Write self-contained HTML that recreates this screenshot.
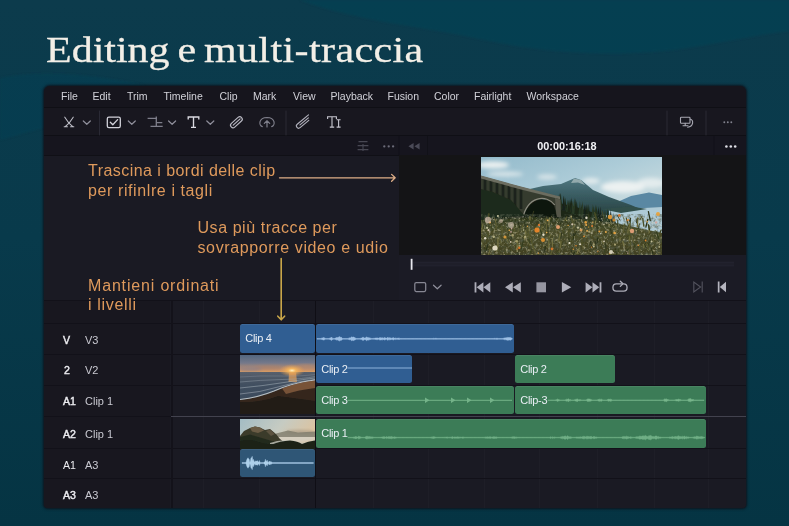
<!DOCTYPE html>
<html>
<head>
<meta charset="utf-8">
<style>
html,body{margin:0;padding:0;}
body{width:789px;height:526px;overflow:hidden;position:relative;background:#0a3a4b;font-family:"Liberation Sans",sans-serif;}
.abs{position:absolute;}
#bg{position:absolute;left:0;top:0;width:789px;height:526px;}
#title{word-spacing:-2.3px;will-change:transform;position:absolute;left:46px;top:25.5px;-webkit-text-stroke:0.3px #f3efe7;font-family:"Liberation Serif",serif;font-size:36.5px;color:#f3efe7;white-space:nowrap;line-height:48px;transform-origin:0 0;transform:scaleX(1.15);}
#win{position:absolute;left:43.5px;top:85.5px;width:702.7px;height:422px;background:#1a1a23;border-radius:6px 6px 4px 4px;overflow:hidden;box-shadow:0 0 2.5px 0.5px rgba(14,14,22,0.85);}
#in{will-change:transform;position:absolute;left:-43.5px;top:-85.5px;width:789px;height:526px;}
#in div,#in svg,#in span{position:absolute;}
.menu span{top:90px;font-size:10.5px;color:#d2d2d9;white-space:nowrap;line-height:13px;}
.ann{color:#df9a5c;font-size:16px;letter-spacing:0.45px;line-height:19.3px;white-space:nowrap;z-index:5;}
.hb{left:63px;font-size:10.6px;color:#ececf0;font-weight:normal;-webkit-text-stroke:0.4px #ececf0;line-height:12px;}
.hn{left:85px;font-size:11px;color:#c9c9d1;line-height:12px;}
.clip{border-radius:2.5px;overflow:hidden;box-shadow:inset 0 1px 0 rgba(255,255,255,0.07);}
.clip span{left:5.3px;top:8px;letter-spacing:-0.3px;font-size:11px;color:#e9eef4;white-space:nowrap;line-height:13px;}
.blue{background:#305e92;}
.green{background:#3c7c57;}
.hl{height:1px;background:#121119;left:42px;width:705px;}
.gl{width:1px;top:301px;height:207px;background:rgba(255,255,255,0.02);}
.vl{width:1px;background:#15151c;top:301px;height:207px;}
</style>
</head>
<body>
<svg id="bg" viewBox="0 0 789 526">
  <defs>
    <linearGradient id="bgg" x1="0" y1="0" x2="0" y2="1">
      <stop offset="0" stop-color="#0c3b4c"/>
      <stop offset="0.45" stop-color="#083a4b"/>
      <stop offset="1" stop-color="#053443"/>
    </linearGradient>
    <filter id="bgb"><feGaussianBlur stdDeviation="1.2"/></filter>
  </defs>
  <rect width="789" height="526" fill="url(#bgg)"/>
  <g filter="url(#bgb)">
  <path d="M300 0 C360 22 420 26 470 37 C540 53 620 60 700 46 C740 39 770 33 789 31 L789 0 Z" fill="#0a4558" opacity="0.55"/>
  <path d="M0 78 C40 70 90 74 140 84 L160 95 L0 140 Z" fill="#0a4558" opacity="0.35"/>
  </g>
</svg>
<div id="title">Editing e <span style="letter-spacing:0.35px">multi-traccia</span></div>

<div id="win"><div id="in">
  <!-- bars -->
  <div style="left:42px;top:84px;width:705px;height:23px;background:#16151d"></div>
  <div style="left:42px;top:107px;width:705px;height:1px;background:#0f0f15"></div>
  <div style="left:42px;top:108px;width:705px;height:27px;background:#18171f"></div>
  <div style="left:42px;top:134.5px;width:705px;height:1px;background:#0f0f15"></div>
  <div style="left:42px;top:136px;width:705px;height:19px;background:#16151e"></div>
  <div style="left:42px;top:155px;width:705px;height:1px;background:#101016"></div>

  <div class="menu">
    <span style="left:61px">File</span>
    <span style="left:92.5px">Edit</span>
    <span style="left:127px">Trim</span>
    <span style="left:163.5px">Timeline</span>
    <span style="left:219.5px">Clip</span>
    <span style="left:253px">Mark</span>
    <span style="left:293px">View</span>
    <span style="left:330.5px">Playback</span>
    <span style="left:387.5px">Fusion</span>
    <span style="left:434px">Color</span>
    <span style="left:474px">Fairlight</span>
    <span style="left:526.5px">Workspace</span>
  </div>

  <!-- TOOLBAR ICONS -->
  <svg id="tb" style="left:42px;top:108px" width="705" height="28" viewBox="42 108 705 28" fill="none" stroke-linecap="round" stroke-linejoin="round">
    <!-- cut icon -->
    <g stroke="#bfbfc8" stroke-width="1.1">
      <path d="M64.8 117.2 L69 123.2 L72.8 126.6 M73.2 117.2 L69 123.2 L65.2 126.6 M64.2 126.8 H67.4 M70.6 126.8 H73.8"/>
    </g>
    <g stroke="#8f8f9b" stroke-width="1.2">
      <path d="M83.3 121 L86.8 124.3 L90.3 121"/>
      <path d="M128.3 121 L131.8 124.3 L135.3 121"/>
      <path d="M168.6 121 L172.1 124.3 L175.6 121"/>
      <path d="M206.8 121 L210.3 124.3 L213.8 121"/>
    </g>
    <path d="M99.5 111 V135 M286 111 V135 M667 111 V135 M706 111 V135" stroke="#2a2a35" stroke-width="1"/>
    <!-- checkbox -->
    <rect x="107.3" y="117.2" width="13" height="10.4" rx="1.6" stroke="#d2d2da" stroke-width="1.3"/>
    <path d="M110.3 122.2 L112.8 124.8 L117.6 119.6" stroke="#d2d2da" stroke-width="1.3"/>
    <!-- trim icon -->
    <g stroke="#7e7e8a" stroke-width="1.3" stroke-linecap="butt">
      <path d="M147.6 118.3 H157 M156.3 116.6 V127 M156.3 122.6 H162.3 M150.5 126.4 H162.7"/>
    </g>
    <!-- T -->
    <path d="M188.2 119.4 V117 H198.8 V119.4 M193.5 117 V127.2 M191 127.3 H196" stroke="#dadae1" stroke-width="1.35" stroke-linecap="butt" stroke-linejoin="miter"/>
    <!-- paperclip (capsule) -->
    <g transform="translate(236.4 122.2) rotate(-42)" stroke="#b9b9c3" stroke-width="1.15">
      <rect x="-7" y="-2.5" width="14" height="5" rx="2.5"/>
      <path d="M-4.3 0 H5"/>
    </g>
    <!-- upload -->
    <g stroke="#7f7f8b" stroke-width="1.2">
      <path d="M262.3 126.6 C258.6 125.4 258.4 117.8 267 117.5 C275.6 117.8 275.4 125.4 271.7 126.6"/>
      <path d="M267 127 V121 M264.3 123.4 L267 120.8 L269.7 123.4"/>
    </g>
    <!-- double clip -->
    <g transform="translate(303.4 122) rotate(-40)" stroke="#b0b0bb" stroke-width="1.15">
      <path d="M8.5 -2.2 H-6.2 A2.2 2.2 0 0 0 -6.2 2.2 H5.2"/>
      <path d="M6.5 0 H-4.5"/>
    </g>
    <!-- Ti -->
    <path d="M327.6 119 V116.8 H336.4 V119 M332 116.8 V127 M329.8 127.1 H334.2 M336.6 119.8 H340.6 M338.6 119.8 V127 M336.6 127.1 H340.6" stroke="#c6c6cf" stroke-width="1.12" stroke-linecap="butt" stroke-linejoin="miter"/>
    <!-- monitor icon -->
    <g stroke="#a9a9b3" stroke-width="1.1">
      <rect x="680.5" y="117.3" width="9.5" height="6" rx="0.8"/>
      <path d="M685.2 123.3 V125.6 M683 125.8 H688"/>
      <path d="M690.3 119.2 C693.8 119.6 693.8 126.4 687.6 127.2"/>
    </g>
    <g fill="#81818d" stroke="none"><circle cx="724.3" cy="122.3" r="0.95"/><circle cx="727.8" cy="122.3" r="0.95"/><circle cx="731.3" cy="122.3" r="0.95"/></g>
  </svg>

  <!-- SUBBAR ICONS -->
  <svg id="sb" style="left:42px;top:136px" width="705" height="20" viewBox="42 136 705 20" fill="none">
    <path d="M399 136 V155 M427.5 136 V155 M714 136 V155" stroke="#111118" stroke-width="1"/>
    <g stroke="#484853" stroke-width="1.1"><path d="M358.5 141.6 H367.5 M357.6 145.6 H368.4 M357.6 149.6 H368.4 M363 144 V151"/></g>
    <g fill="#6b6b78"><circle cx="384.3" cy="146.4" r="1.15"/><circle cx="388.7" cy="146.4" r="1.15"/><circle cx="393.1" cy="146.4" r="1.15"/></g>
    <g fill="#4a4a57"><path d="M413.6 143 V149.4 L408.4 146.2 Z M419.6 143 V149.4 L414.4 146.2 Z"/></g>
    <text x="566.9" y="150.2" text-anchor="middle" font-family="Liberation Sans" font-weight="bold" font-size="10.9" fill="#f1f1f5">00:00:16:18</text>
    <g fill="#dfdfe6"><circle cx="726.4" cy="146.5" r="1.3"/><circle cx="730.8" cy="146.5" r="1.3"/><circle cx="735.2" cy="146.5" r="1.3"/></g>
  </svg>

  <!-- left annotation panel -->
  <div class="ann" style="left:88px;top:161.3px">Trascina i bordi delle clip<br><span style="position:static;letter-spacing:0.6px">per rifinlre i tagli</span></div>
  <div class="ann" style="left:197.5px;top:218.3px"><span style="position:static;letter-spacing:0.56px">Usa più tracce per</span><br><span style="position:static;letter-spacing:0.62px">sovrapporre video e udio</span></div>
  <div class="ann" style="left:88px;top:276px"><span style="position:static;letter-spacing:0.83px">Mantieni ordinati</span><br><span style="position:static;letter-spacing:0.67px">i livelli</span></div>

  <!-- viewer -->
  <div style="left:399px;top:155px;width:348px;height:100px;background:#141416"></div>
  <div style="left:399px;top:255px;width:348px;height:45px;background:#1b1b25"></div>
  <div id="vid" style="left:481px;top:156.7px;width:180.5px;height:98px;background:#4a6a60;overflow:hidden"><svg width="181" height="98" viewBox="0 0 181 98" style="left:0;top:0">
<defs>
<linearGradient id="sky" x1="0" y1="0" x2="1" y2="1"><stop offset="0" stop-color="#93bacb"/><stop offset="0.45" stop-color="#adccd8"/><stop offset="1" stop-color="#d8e3e2"/></linearGradient>
<linearGradient id="mt" x1="0" y1="0" x2="0" y2="1"><stop offset="0" stop-color="#4f7780"/><stop offset="0.5" stop-color="#37595e"/><stop offset="1" stop-color="#27403f"/></linearGradient>
<linearGradient id="fg" x1="0" y1="0" x2="0" y2="1"><stop offset="0" stop-color="#2b341c"/><stop offset="0.35" stop-color="#494b27"/><stop offset="1" stop-color="#414022"/></linearGradient>
<filter id="b1"><feGaussianBlur stdDeviation="0.6"/></filter>
<filter id="b2"><feGaussianBlur stdDeviation="2.2"/></filter>
<filter id="nz" x="0" y="0" width="100%" height="100%"><feTurbulence type="fractalNoise" baseFrequency="0.4" numOctaves="3" seed="4"/><feColorMatrix type="matrix" values="0 0 0 0 0.66  0 0 0 0 0.62  0 0 0 0 0.42  1.7 0 0 0 -0.86"/></filter>
<filter id="nz2" x="0" y="0" width="100%" height="100%"><feTurbulence type="fractalNoise" baseFrequency="0.28" numOctaves="3" seed="9"/><feColorMatrix type="matrix" values="0 0 0 0 0.09  0 0 0 0 0.11  0 0 0 0 0.07  0 1.9 0 0 -0.78"/></filter>
</defs>
<rect width="181" height="62" fill="url(#sky)"/>
<g filter="url(#b2)" fill="#ecf1f1"><ellipse cx="12" cy="8" rx="16" ry="3.5"/><ellipse cx="24" cy="17" rx="18" ry="2.6" opacity="0.75"/><ellipse cx="142" cy="30" rx="22" ry="6"/><ellipse cx="170" cy="26" rx="14" ry="5" opacity="0.8"/><ellipse cx="66" cy="20" rx="10" ry="2.5" opacity="0.7"/><ellipse cx="110" cy="24" rx="9" ry="3" opacity="0.85"/></g>
<g filter="url(#b1)">
<path d="M134 46 L150 39 L168 35.5 L181 38 V56 H134 Z" fill="#5a88a3"/>
<path d="M40 34 L62 29 L80 27 L94 21 L100 23 L112 33 L128 40 L150 48 L164 54 L110 60 L40 60 Z" fill="url(#mt)"/>
<path d="M93 21.5 L100 23 L104 28 L97 25.5 L90 26 Z" fill="#93aaad"/>
<path d="M128 53 L181 50 V80 L128 76 Z" fill="#aecad6"/>
<path d="M120 52 L150 49.5 L166 52 L140 56 Z" fill="#31504c"/>
<path d="M0 26 L20 30 L45 40 L70 44 L95 50 L120 58 L134 64 L140 76 L150 98 H0 Z" fill="#1c2719"/>
<path d="M115.6 64.9 L117.2 51.5 L118.8 64.9 Z" fill="#24321f"/><path d="M115.7 65.0 L117.3 48.9 L118.9 65.0 Z" fill="#18211a"/><path d="M94.2 57.9 L95.8 43.9 L97.4 57.9 Z" fill="#1c2819"/><path d="M97.3 58.9 L98.9 43.9 L100.5 58.9 Z" fill="#2a3a26"/><path d="M102.6 60.6 L104.2 48.1 L105.8 60.6 Z" fill="#18211a"/><path d="M82.6 54.0 L84.2 40.4 L85.8 54.0 Z" fill="#1c2819"/><path d="M127.5 68.9 L129.1 54.6 L130.7 68.9 Z" fill="#18211a"/><path d="M98.9 59.4 L100.5 47.0 L102.1 59.4 Z" fill="#24321f"/><path d="M78.0 52.5 L79.6 39.9 L81.2 52.5 Z" fill="#1c2819"/><path d="M78.3 52.6 L79.9 37.0 L81.5 52.6 Z" fill="#2a3a26"/><path d="M113.1 64.1 L114.7 47.4 L116.3 64.1 Z" fill="#2a3a26"/><path d="M121.6 66.9 L123.2 52.9 L124.8 66.9 Z" fill="#2a3a26"/><path d="M113.9 64.4 L115.5 48.3 L117.1 64.4 Z" fill="#24321f"/><path d="M125.3 68.2 L126.9 53.1 L128.5 68.2 Z" fill="#24321f"/><path d="M106.2 61.8 L107.8 46.9 L109.4 61.8 Z" fill="#1c2819"/><path d="M111.1 63.4 L112.7 48.9 L114.3 63.4 Z" fill="#24321f"/><path d="M88.8 56.1 L90.4 43.7 L92.0 56.1 Z" fill="#1c2819"/><path d="M100.0 59.8 L101.6 44.1 L103.2 59.8 Z" fill="#2a3a26"/><path d="M77.5 52.4 L79.1 36.1 L80.7 52.4 Z" fill="#18211a"/><path d="M105.1 61.5 L106.7 47.4 L108.3 61.5 Z" fill="#24321f"/><path d="M85.1 54.9 L86.7 42.5 L88.3 54.9 Z" fill="#2a3a26"/><path d="M111.4 63.5 L113.0 50.4 L114.6 63.5 Z" fill="#24321f"/><path d="M131.6 70.2 L133.2 57.7 L134.8 70.2 Z" fill="#2a3a26"/><path d="M130.5 69.9 L132.1 55.6 L133.7 69.9 Z" fill="#1c2819"/><path d="M110.0 63.1 L111.6 50.9 L113.2 63.1 Z" fill="#2a3a26"/><path d="M76.5 52.0 L78.1 36.3 L79.7 52.0 Z" fill="#1c2819"/><path d="M89.0 56.2 L90.6 40.4 L92.2 56.2 Z" fill="#1c2819"/><path d="M117.6 65.6 L119.2 49.3 L120.8 65.6 Z" fill="#18211a"/><path d="M113.3 64.2 L114.9 49.5 L116.5 64.2 Z" fill="#24321f"/><path d="M89.8 56.4 L91.4 44.1 L93.0 56.4 Z" fill="#2a3a26"/><path d="M92.2 57.2 L93.8 40.7 L95.4 57.2 Z" fill="#2a3a26"/><path d="M102.1 60.5 L103.7 47.4 L105.3 60.5 Z" fill="#18211a"/><path d="M128.2 69.1 L129.8 52.6 L131.4 69.1 Z" fill="#18211a"/><path d="M91.5 57.0 L93.1 42.6 L94.7 57.0 Z" fill="#2a3a26"/><path d="M124.9 68.0 L126.5 51.6 L128.1 68.0 Z" fill="#24321f"/><path d="M87.8 55.8 L89.4 42.1 L91.0 55.8 Z" fill="#1c2819"/><path d="M122.7 67.3 L124.3 53.8 L125.9 67.3 Z" fill="#2a3a26"/><path d="M93.2 57.5 L94.8 41.6 L96.4 57.5 Z" fill="#1c2819"/><path d="M81.4 53.6 L83.0 38.9 L84.6 53.6 Z" fill="#2a3a26"/><path d="M119.6 66.3 L121.2 53.1 L122.8 66.3 Z" fill="#18211a"/><path d="M104.1 61.1 L105.7 47.3 L107.3 61.1 Z" fill="#1c2819"/><path d="M86.5 55.3 L88.1 42.4 L89.7 55.3 Z" fill="#2a3a26"/><path d="M77.7 52.4 L79.3 35.9 L80.9 52.4 Z" fill="#24321f"/><path d="M81.1 53.5 L82.7 38.4 L84.3 53.5 Z" fill="#18211a"/><path d="M110.3 63.2 L111.9 47.1 L113.5 63.2 Z" fill="#2a3a26"/><path d="M86.3 55.3 L87.9 43.0 L89.5 55.3 Z" fill="#1c2819"/><path d="M9.5 44.2 L11.3 28.6 L13.1 44.2 Z" fill="#24321f"/><path d="M34.6 51.2 L36.4 35.5 L38.2 51.2 Z" fill="#24321f"/><path d="M32.4 50.6 L34.2 35.4 L36.0 50.6 Z" fill="#1c2819"/><path d="M34.6 51.2 L36.4 36.9 L38.2 51.2 Z" fill="#1c2819"/><path d="M18.3 46.6 L20.1 27.7 L21.9 46.6 Z" fill="#1c2819"/><path d="M3.3 42.4 L5.1 24.0 L6.9 42.4 Z" fill="#2d3b25"/><path d="M29.1 49.6 L30.9 33.9 L32.7 49.6 Z" fill="#1c2819"/><path d="M18.7 46.8 L20.5 27.9 L22.3 46.8 Z" fill="#1c2819"/><path d="M22.7 47.9 L24.5 32.4 L26.3 47.9 Z" fill="#1c2819"/><path d="M39.3 52.5 L41.1 38.2 L42.9 52.5 Z" fill="#1c2819"/><path d="M18.9 46.8 L20.7 32.5 L22.5 46.8 Z" fill="#2d3b25"/><path d="M18.1 46.6 L19.9 32.3 L21.7 46.6 Z" fill="#2d3b25"/><path d="M41.6 53.2 L43.4 37.7 L45.2 53.2 Z" fill="#2d3b25"/><path d="M0.7 41.7 L2.5 23.0 L4.3 41.7 Z" fill="#1c2819"/><path d="M29.0 49.6 L30.8 30.7 L32.6 49.6 Z" fill="#1c2819"/><path d="M7.0 43.5 L8.8 27.5 L10.6 43.5 Z" fill="#2d3b25"/><path d="M23.0 48.0 L24.8 33.0 L26.6 48.0 Z" fill="#2d3b25"/><path d="M33.7 50.9 L35.5 35.1 L37.3 50.9 Z" fill="#24321f"/><path d="M-0.8 41.3 L1.0 27.0 L2.8 41.3 Z" fill="#2d3b25"/><path d="M36.9 51.8 L38.7 37.6 L40.5 51.8 Z" fill="#24321f"/><path d="M11.1 44.6 L12.9 27.9 L14.7 44.6 Z" fill="#1c2819"/><path d="M16.9 46.2 L18.7 28.4 L20.5 46.2 Z" fill="#1c2819"/>
<path d="M0 19 L40 30 L79 40 L80 52 L79 64 L73 49 C65 38 49 39 42 60 L36 64 L0 46 Z" fill="#363a2e"/>
<path d="M4 22 V44 M10 24 V46 M16 25 V48 M22 27 V50 M28 29 V52 M34 30 V54 M40 32 V52" stroke="#1d241a" stroke-width="2.8"/>
<path d="M0 18.5 L40 29.5 L79 39.5 L79 42.2 L40 32.5 L0 21.5 Z" fill="#6c6d60"/>
<path d="M74 41 L79.5 42.5 L80 60 L75.5 60 Z" fill="#55574a"/>
<path d="M42 63 C47 40 65 38 73 48.5 L77 65 Z" fill="#11160f"/>
<path d="M41.5 62 C46.5 38.5 65.5 37 73.8 48" stroke="#8a8a7e" stroke-width="1.2" fill="none"/>
<path d="M0 32 L12 35 L30 43 L44 59 L0 62 Z" fill="#1f2a1b"/>
<path d="M0 63 L50 60 L100 62 L134 66 L181 76 V98 H0 Z" fill="url(#fg)"/>
</g>
<rect y="57" width="181" height="41" filter="url(#nz2)"/>
<rect y="60" width="181" height="38" filter="url(#nz)"/>
<g filter="url(#b1)" stroke-linecap="round"><path d="M159.0 62.7 l2.0 -3.5" stroke="#55572d" stroke-width="1.2"/><path d="M136.7 69.2 l0.1 -6.0" stroke="#343d1d" stroke-width="1.0"/><path d="M88.5 87.8 l-1.7 -3.9" stroke="#4a4d26" stroke-width="0.8"/><path d="M115.2 62.4 l-1.6 -7.0" stroke="#55572d" stroke-width="0.7"/><path d="M149.1 75.7 l-2.3 -3.4" stroke="#4a4d26" stroke-width="1.0"/><path d="M122.5 86.8 l-1.3 -3.2" stroke="#6b693a" stroke-width="0.9"/><path d="M45.1 69.6 l0.1 -7.4" stroke="#2a321a" stroke-width="0.7"/><path d="M148.9 70.1 l0.5 -7.4" stroke="#343d1d" stroke-width="1.1"/><path d="M115.7 62.8 l-1.7 -6.0" stroke="#4a4d26" stroke-width="1.3"/><path d="M145.2 96.4 l1.4 -4.3" stroke="#343d1d" stroke-width="1.3"/><path d="M96.0 96.5 l2.2 -5.3" stroke="#7d7a48" stroke-width="1.3"/><path d="M142.9 62.4 l-1.2 -4.0" stroke="#4a4d26" stroke-width="0.6"/><path d="M67.7 90.4 l0.2 -8.6" stroke="#6b693a" stroke-width="1.3"/><path d="M37.2 99.9 l-0.3 -4.7" stroke="#2f351b" stroke-width="1.2"/><path d="M171.9 96.6 l-1.6 -5.4" stroke="#2a321a" stroke-width="1.0"/><path d="M146.7 75.8 l2.1 -9.0" stroke="#6b693a" stroke-width="1.4"/><path d="M135.9 99.4 l-1.4 -7.5" stroke="#2a321a" stroke-width="1.0"/><path d="M66.7 99.7 l-1.3 -3.7" stroke="#7d7a48" stroke-width="0.9"/><path d="M115.4 91.3 l-1.2 -6.9" stroke="#2a321a" stroke-width="0.9"/><path d="M68.0 80.6 l1.8 -3.2" stroke="#7d7a48" stroke-width="0.8"/><path d="M142.1 74.8 l1.2 -7.8" stroke="#5f5f34" stroke-width="1.2"/><path d="M178.8 76.3 l1.4 -3.2" stroke="#3d4321" stroke-width="1.3"/><path d="M53.4 93.6 l-1.4 -4.2" stroke="#5f5f34" stroke-width="1.2"/><path d="M146.2 80.3 l2.1 -3.2" stroke="#343d1d" stroke-width="0.7"/><path d="M60.1 75.5 l1.0 -6.6" stroke="#5f5f34" stroke-width="1.3"/><path d="M135.2 76.2 l-0.2 -7.4" stroke="#7d7a48" stroke-width="0.7"/><path d="M161.0 84.6 l-2.1 -8.3" stroke="#4a4d26" stroke-width="0.8"/><path d="M114.1 67.6 l0.6 -3.6" stroke="#7d7a48" stroke-width="1.1"/><path d="M92.5 67.1 l0.9 -4.3" stroke="#5f5f34" stroke-width="0.9"/><path d="M116.9 76.0 l-1.1 -8.1" stroke="#2a321a" stroke-width="0.8"/><path d="M148.5 64.3 l1.1 -3.1" stroke="#2f351b" stroke-width="1.1"/><path d="M79.9 81.0 l0.7 -5.2" stroke="#2f351b" stroke-width="1.1"/><path d="M65.8 75.2 l-0.2 -6.8" stroke="#5f5f34" stroke-width="1.0"/><path d="M40.2 92.0 l2.0 -8.1" stroke="#343d1d" stroke-width="1.3"/><path d="M139.4 96.3 l-1.7 -5.1" stroke="#55572d" stroke-width="0.6"/><path d="M48.8 88.3 l-2.3 -4.3" stroke="#7d7a48" stroke-width="0.7"/><path d="M27.3 85.7 l-1.9 -4.3" stroke="#6b693a" stroke-width="1.0"/><path d="M20.8 77.4 l1.0 -4.2" stroke="#55572d" stroke-width="1.0"/><path d="M15.3 71.2 l-0.3 -4.5" stroke="#55572d" stroke-width="1.2"/><path d="M167.1 88.5 l2.3 -5.4" stroke="#343d1d" stroke-width="1.2"/><path d="M123.7 95.6 l-0.0 -3.2" stroke="#3d4321" stroke-width="1.3"/><path d="M138.8 84.0 l0.7 -3.2" stroke="#6b693a" stroke-width="1.2"/><path d="M46.2 79.9 l-1.7 -6.2" stroke="#7d7a48" stroke-width="0.9"/><path d="M119.5 86.9 l-1.0 -8.5" stroke="#3d4321" stroke-width="0.7"/><path d="M105.3 80.5 l-1.8 -7.5" stroke="#6b693a" stroke-width="0.8"/><path d="M20.2 87.2 l-2.3 -8.4" stroke="#5f5f34" stroke-width="1.2"/><path d="M148.9 81.5 l-0.1 -6.8" stroke="#55572d" stroke-width="1.0"/><path d="M65.5 69.5 l0.5 -6.8" stroke="#5f5f34" stroke-width="0.9"/><path d="M138.7 62.7 l-2.3 -4.2" stroke="#2f351b" stroke-width="0.8"/><path d="M156.3 74.8 l2.3 -8.1" stroke="#2a321a" stroke-width="0.8"/><path d="M63.8 94.1 l0.5 -4.7" stroke="#2a321a" stroke-width="1.3"/><path d="M124.5 80.2 l2.0 -5.2" stroke="#4a4d26" stroke-width="1.1"/><path d="M51.8 90.5 l-1.3 -8.3" stroke="#55572d" stroke-width="1.4"/><path d="M59.0 76.4 l-2.4 -7.3" stroke="#6b693a" stroke-width="1.1"/><path d="M164.9 70.1 l1.9 -7.7" stroke="#2a321a" stroke-width="1.3"/><path d="M148.2 99.2 l0.8 -6.9" stroke="#5f5f34" stroke-width="0.8"/><path d="M30.0 96.3 l-1.0 -7.0" stroke="#3d4321" stroke-width="0.7"/><path d="M69.5 67.2 l-1.7 -7.5" stroke="#343d1d" stroke-width="0.7"/><path d="M85.2 64.8 l0.1 -3.7" stroke="#4a4d26" stroke-width="0.8"/><path d="M80.3 89.1 l2.3 -7.6" stroke="#3d4321" stroke-width="1.0"/><path d="M50.3 62.2 l2.4 -8.0" stroke="#3d4321" stroke-width="0.8"/><path d="M112.5 73.9 l-1.8 -8.1" stroke="#7d7a48" stroke-width="0.9"/><path d="M168.5 75.4 l-1.1 -7.9" stroke="#6b693a" stroke-width="1.2"/><path d="M0.7 74.9 l1.0 -7.7" stroke="#6b693a" stroke-width="1.0"/><path d="M7.6 63.1 l0.3 -6.4" stroke="#4a4d26" stroke-width="1.3"/><path d="M152.5 85.6 l-1.5 -6.6" stroke="#6b693a" stroke-width="0.7"/><path d="M131.7 77.7 l-0.5 -4.3" stroke="#4a4d26" stroke-width="1.2"/><path d="M153.9 90.4 l-0.9 -4.5" stroke="#343d1d" stroke-width="0.8"/><path d="M78.0 95.2 l2.0 -6.7" stroke="#55572d" stroke-width="1.0"/><path d="M128.1 97.5 l0.6 -4.1" stroke="#6b693a" stroke-width="1.4"/><path d="M158.5 96.6 l0.3 -8.4" stroke="#55572d" stroke-width="1.3"/><path d="M167.9 93.1 l-2.5 -6.7" stroke="#55572d" stroke-width="1.2"/><path d="M177.8 81.8 l-2.2 -6.8" stroke="#343d1d" stroke-width="1.4"/><path d="M173.7 78.7 l0.5 -5.2" stroke="#3d4321" stroke-width="0.9"/><path d="M79.3 90.5 l0.7 -6.4" stroke="#6b693a" stroke-width="1.4"/><path d="M54.3 97.2 l-0.4 -4.0" stroke="#6b693a" stroke-width="0.9"/><path d="M47.1 75.4 l-0.7 -7.5" stroke="#2f351b" stroke-width="1.0"/><path d="M164.1 86.4 l-0.1 -5.8" stroke="#2a321a" stroke-width="1.0"/><path d="M43.5 82.9 l0.9 -7.6" stroke="#7d7a48" stroke-width="0.9"/><path d="M110.9 90.3 l-1.4 -5.5" stroke="#2f351b" stroke-width="1.3"/><path d="M156.6 69.7 l0.1 -8.9" stroke="#6b693a" stroke-width="1.3"/><path d="M17.0 89.5 l-0.1 -8.0" stroke="#7d7a48" stroke-width="1.1"/><path d="M48.7 81.1 l0.7 -8.2" stroke="#55572d" stroke-width="1.1"/><path d="M20.8 73.1 l0.2 -4.2" stroke="#55572d" stroke-width="1.2"/><path d="M91.9 83.1 l1.0 -6.8" stroke="#2a321a" stroke-width="1.4"/><path d="M152.5 77.1 l-2.4 -5.6" stroke="#6b693a" stroke-width="0.8"/><path d="M67.8 69.5 l0.6 -8.6" stroke="#7d7a48" stroke-width="1.3"/><path d="M88.5 84.3 l-0.7 -3.4" stroke="#2a321a" stroke-width="0.9"/><path d="M61.4 78.3 l-1.7 -4.6" stroke="#343d1d" stroke-width="1.3"/><path d="M155.5 65.9 l0.4 -4.0" stroke="#2a321a" stroke-width="0.9"/><path d="M94.8 96.9 l-2.2 -3.2" stroke="#55572d" stroke-width="1.1"/><path d="M148.7 83.6 l-0.5 -4.0" stroke="#6b693a" stroke-width="1.3"/><path d="M83.5 63.6 l2.2 -3.9" stroke="#6b693a" stroke-width="0.9"/><path d="M112.7 68.2 l0.9 -5.1" stroke="#3d4321" stroke-width="0.8"/><path d="M92.5 68.8 l-2.3 -8.9" stroke="#55572d" stroke-width="1.4"/><path d="M144.1 74.8 l-0.1 -7.8" stroke="#3d4321" stroke-width="0.7"/><path d="M130.9 77.3 l-1.8 -6.5" stroke="#2f351b" stroke-width="1.0"/><path d="M16.0 94.0 l0.8 -5.4" stroke="#5f5f34" stroke-width="1.3"/><path d="M137.1 95.6 l0.7 -5.5" stroke="#343d1d" stroke-width="0.6"/><path d="M142.9 88.9 l-1.2 -4.4" stroke="#7d7a48" stroke-width="1.1"/><path d="M100.7 70.8 l-0.8 -5.3" stroke="#3d4321" stroke-width="1.4"/><path d="M162.8 69.2 l-1.1 -8.0" stroke="#4a4d26" stroke-width="1.3"/><path d="M123.2 63.0 l-2.2 -8.9" stroke="#55572d" stroke-width="0.7"/><path d="M89.6 86.8 l2.4 -7.7" stroke="#4a4d26" stroke-width="0.9"/><path d="M40.9 71.9 l1.2 -4.1" stroke="#6b693a" stroke-width="0.7"/><path d="M66.9 77.4 l0.1 -8.8" stroke="#2f351b" stroke-width="1.0"/><path d="M162.6 90.6 l0.6 -3.5" stroke="#6b693a" stroke-width="1.4"/><path d="M128.8 97.6 l-1.4 -5.5" stroke="#2a321a" stroke-width="0.8"/><path d="M37.1 68.4 l0.5 -3.3" stroke="#2a321a" stroke-width="1.1"/><path d="M132.4 83.6 l-2.0 -4.7" stroke="#3d4321" stroke-width="1.1"/><path d="M48.5 99.5 l1.7 -7.1" stroke="#343d1d" stroke-width="0.8"/><path d="M87.3 76.5 l2.4 -3.4" stroke="#4a4d26" stroke-width="1.2"/><path d="M49.0 62.7 l-0.1 -3.2" stroke="#6b693a" stroke-width="1.4"/><path d="M69.7 97.9 l2.1 -7.3" stroke="#5f5f34" stroke-width="1.1"/><path d="M48.6 85.9 l-0.9 -4.6" stroke="#343d1d" stroke-width="0.7"/><path d="M7.5 98.4 l1.6 -6.4" stroke="#6b693a" stroke-width="1.0"/><path d="M29.1 85.4 l2.4 -7.7" stroke="#2a321a" stroke-width="0.8"/><path d="M124.9 91.7 l-0.1 -5.1" stroke="#2f351b" stroke-width="1.2"/><path d="M45.1 80.5 l0.8 -4.5" stroke="#4a4d26" stroke-width="0.8"/><path d="M28.2 80.1 l-1.7 -8.7" stroke="#3d4321" stroke-width="1.0"/><path d="M86.4 71.8 l-1.2 -3.9" stroke="#55572d" stroke-width="0.6"/><path d="M115.9 87.0 l0.7 -5.9" stroke="#2a321a" stroke-width="1.3"/><path d="M36.4 75.9 l1.8 -4.9" stroke="#5f5f34" stroke-width="0.7"/><path d="M62.6 77.9 l-0.6 -4.8" stroke="#7d7a48" stroke-width="0.8"/><path d="M147.5 69.0 l-2.3 -8.2" stroke="#4a4d26" stroke-width="1.2"/><path d="M44.2 71.8 l-0.5 -6.5" stroke="#2f351b" stroke-width="1.1"/><path d="M56.6 67.9 l-2.3 -7.5" stroke="#343d1d" stroke-width="0.6"/><path d="M82.9 80.7 l0.1 -5.7" stroke="#3d4321" stroke-width="1.3"/><path d="M93.4 78.6 l1.9 -3.9" stroke="#2a321a" stroke-width="1.0"/><path d="M7.6 80.3 l-0.4 -8.9" stroke="#2f351b" stroke-width="0.8"/><path d="M168.5 72.8 l-1.0 -4.6" stroke="#343d1d" stroke-width="1.3"/><path d="M33.5 74.5 l-0.8 -7.4" stroke="#5f5f34" stroke-width="0.7"/><path d="M128.0 78.6 l0.8 -4.3" stroke="#5f5f34" stroke-width="0.7"/><path d="M108.6 71.3 l-2.1 -8.2" stroke="#5f5f34" stroke-width="0.7"/><path d="M63.6 67.7 l1.8 -7.6" stroke="#5f5f34" stroke-width="1.0"/><path d="M179.0 80.0 l-0.6 -3.5" stroke="#4a4d26" stroke-width="1.1"/><path d="M147.3 81.8 l0.9 -5.2" stroke="#4a4d26" stroke-width="1.2"/><path d="M108.0 62.8 l-0.3 -5.3" stroke="#343d1d" stroke-width="1.2"/><path d="M150.0 88.0 l-1.3 -3.2" stroke="#55572d" stroke-width="1.1"/><path d="M77.5 99.0 l-1.5 -4.0" stroke="#3d4321" stroke-width="1.0"/><path d="M102.4 91.8 l-2.3 -5.4" stroke="#5f5f34" stroke-width="1.0"/><path d="M77.5 84.4 l1.7 -7.7" stroke="#6b693a" stroke-width="1.4"/><path d="M101.8 86.5 l-1.5 -3.8" stroke="#4a4d26" stroke-width="1.2"/><path d="M165.1 90.9 l-1.6 -3.6" stroke="#2f351b" stroke-width="0.9"/><path d="M71.3 89.2 l0.2 -7.6" stroke="#7d7a48" stroke-width="0.9"/><path d="M169.3 63.6 l-1.9 -8.9" stroke="#2a321a" stroke-width="1.3"/><path d="M114.7 79.4 l1.1 -4.7" stroke="#55572d" stroke-width="1.0"/><path d="M69.1 86.0 l-2.3 -6.6" stroke="#55572d" stroke-width="0.8"/><path d="M47.4 78.1 l-0.7 -8.1" stroke="#55572d" stroke-width="1.3"/><path d="M27.5 83.0 l2.0 -3.1" stroke="#3d4321" stroke-width="1.2"/><path d="M25.6 73.9 l-2.0 -5.7" stroke="#55572d" stroke-width="0.9"/><path d="M35.9 89.8 l0.7 -5.8" stroke="#6b693a" stroke-width="1.2"/><path d="M91.6 71.9 l2.4 -3.9" stroke="#6b693a" stroke-width="0.9"/><path d="M78.2 72.8 l2.0 -6.9" stroke="#4a4d26" stroke-width="1.2"/><path d="M38.6 70.8 l-0.9 -5.9" stroke="#2f351b" stroke-width="1.0"/><path d="M11.3 73.7 l-1.7 -8.3" stroke="#3d4321" stroke-width="1.1"/><path d="M4.2 95.0 l-0.6 -4.6" stroke="#2f351b" stroke-width="0.9"/><path d="M78.8 68.0 l1.5 -3.5" stroke="#2a321a" stroke-width="1.0"/><path d="M129.9 66.7 l-1.2 -6.7" stroke="#7d7a48" stroke-width="0.8"/><path d="M115.8 65.8 l2.5 -3.0" stroke="#2a321a" stroke-width="0.9"/><path d="M7.5 79.7 l-0.8 -6.3" stroke="#55572d" stroke-width="1.0"/><path d="M91.4 99.8 l2.3 -4.8" stroke="#2a321a" stroke-width="1.2"/><path d="M0.7 89.5 l2.4 -8.5" stroke="#5f5f34" stroke-width="0.7"/><path d="M5.1 93.5 l1.9 -6.1" stroke="#2a321a" stroke-width="1.2"/><path d="M35.3 92.4 l2.0 -4.2" stroke="#7d7a48" stroke-width="1.3"/><path d="M25.2 98.6 l-1.6 -7.8" stroke="#4a4d26" stroke-width="0.9"/><path d="M91.2 96.5 l-1.3 -3.7" stroke="#2f351b" stroke-width="1.1"/><path d="M15.0 66.1 l-1.4 -5.2" stroke="#6b693a" stroke-width="1.0"/><path d="M172.7 84.4 l-0.7 -4.1" stroke="#5f5f34" stroke-width="1.1"/><path d="M69.1 62.3 l1.5 -3.1" stroke="#6b693a" stroke-width="0.7"/></g>
<g filter="url(#b1)" opacity="0.95"><circle cx="29.7" cy="84.9" r="0.9" fill="#d9c9b5"/><circle cx="38.9" cy="88.9" r="0.6" fill="#b9b488"/><circle cx="95.0" cy="88.7" r="0.8" fill="#e58a2e"/><circle cx="105.4" cy="60.7" r="1.2" fill="#e8e2cf"/><circle cx="124.9" cy="75.0" r="1.0" fill="#f0b050"/><circle cx="6.1" cy="70.8" r="1.1" fill="#c9c4a0"/><circle cx="116.8" cy="94.6" r="0.6" fill="#e58a2e"/><circle cx="147.2" cy="62.9" r="0.9" fill="#e58a2e"/><circle cx="99.4" cy="71.4" r="0.6" fill="#c9c4a0"/><circle cx="119.7" cy="76.3" r="0.6" fill="#e8e2cf"/><circle cx="35.5" cy="84.3" r="1.3" fill="#a8a070"/><circle cx="12.8" cy="79.8" r="1.2" fill="#b9b488"/><circle cx="36.2" cy="94.0" r="0.8" fill="#b9b488"/><circle cx="65.7" cy="75.6" r="0.8" fill="#f0b050"/><circle cx="87.2" cy="68.4" r="0.6" fill="#e9a23c"/><circle cx="128.9" cy="96.3" r="0.9" fill="#e58a2e"/><circle cx="99.1" cy="87.2" r="1.0" fill="#e8e2cf"/><circle cx="57.4" cy="96.2" r="0.6" fill="#e9a23c"/><circle cx="30.6" cy="71.6" r="0.8" fill="#cfa7a0"/><circle cx="107.5" cy="70.0" r="0.6" fill="#e9a23c"/><circle cx="166.2" cy="64.8" r="0.8" fill="#f0b050"/><circle cx="123.0" cy="84.4" r="0.8" fill="#e8e2cf"/><circle cx="178.0" cy="95.5" r="0.5" fill="#a8a070"/><circle cx="62.4" cy="77.7" r="1.2" fill="#e8e2cf"/><circle cx="44.3" cy="79.9" r="1.1" fill="#c9c4a0"/><circle cx="139.3" cy="76.8" r="0.5" fill="#d9c9b5"/><circle cx="46.4" cy="69.3" r="0.7" fill="#f0b050"/><circle cx="71.0" cy="91.9" r="1.3" fill="#d9742a"/><circle cx="134.3" cy="76.7" r="0.6" fill="#d9c9b5"/><circle cx="117.0" cy="93.5" r="0.5" fill="#c9c4a0"/><circle cx="38.2" cy="90.7" r="1.2" fill="#d9742a"/><circle cx="108.2" cy="74.6" r="1.2" fill="#a8a070"/><circle cx="85.8" cy="63.4" r="0.7" fill="#a8a070"/><circle cx="138.3" cy="58.4" r="1.3" fill="#d9742a"/><circle cx="4.2" cy="81.2" r="1.2" fill="#e8e2cf"/><circle cx="105.2" cy="68.0" r="1.1" fill="#f0b050"/><circle cx="146.2" cy="63.4" r="0.6" fill="#d9742a"/><circle cx="16.9" cy="59.0" r="1.1" fill="#c9c4a0"/><circle cx="12.9" cy="62.6" r="0.6" fill="#d9c9b5"/><circle cx="97.0" cy="70.6" r="1.2" fill="#c9c4a0"/><circle cx="111.8" cy="65.1" r="0.7" fill="#f0b050"/><circle cx="134.0" cy="87.5" r="1.1" fill="#a8a070"/><circle cx="157.3" cy="88.2" r="0.8" fill="#e58a2e"/><circle cx="155.6" cy="73.5" r="0.6" fill="#a8a070"/><circle cx="128.1" cy="67.9" r="0.8" fill="#a8a070"/><circle cx="7.5" cy="73.2" r="1.1" fill="#d9c9b5"/><circle cx="178.3" cy="89.9" r="0.9" fill="#b9b488"/><circle cx="103.1" cy="79.3" r="0.9" fill="#e58a2e"/><circle cx="132.2" cy="95.7" r="0.7" fill="#d9c9b5"/><circle cx="112.5" cy="87.6" r="0.6" fill="#e8e2cf"/><circle cx="146.6" cy="96.1" r="0.6" fill="#cfa7a0"/><circle cx="118.4" cy="74.4" r="1.0" fill="#e9a23c"/><circle cx="112.8" cy="89.5" r="0.9" fill="#c9c4a0"/><circle cx="170.5" cy="84.5" r="0.9" fill="#c9c4a0"/><circle cx="92.3" cy="92.2" r="0.7" fill="#e9a23c"/><circle cx="8.8" cy="74.9" r="0.7" fill="#e8e2cf"/><circle cx="106.1" cy="73.8" r="0.9" fill="#f0b050"/><circle cx="42.6" cy="73.0" r="0.7" fill="#c9c4a0"/><circle cx="164.6" cy="83.5" r="0.9" fill="#e58a2e"/><circle cx="88.5" cy="86.0" r="1.1" fill="#e8e2cf"/><circle cx="112.8" cy="87.6" r="1.1" fill="#a8a070"/><circle cx="122.9" cy="67.6" r="0.8" fill="#c9c4a0"/><circle cx="110.6" cy="90.2" r="0.6" fill="#e58a2e"/><circle cx="36.4" cy="92.2" r="0.6" fill="#d9742a"/><circle cx="31.6" cy="78.4" r="1.3" fill="#a8a070"/><circle cx="133.6" cy="76.0" r="1.3" fill="#e9a23c"/><circle cx="30.0" cy="74.9" r="0.8" fill="#cfa7a0"/><circle cx="104.7" cy="65.4" r="1.3" fill="#e9a23c"/><circle cx="58.0" cy="67.9" r="1.2" fill="#d9742a"/><circle cx="91.3" cy="67.3" r="1.1" fill="#d9c9b5"/><circle cx="28.3" cy="73.3" r="0.8" fill="#f0b050"/><circle cx="111.1" cy="68.9" r="1.0" fill="#d9742a"/><circle cx="111.9" cy="61.9" r="0.5" fill="#e8e2cf"/><circle cx="145.9" cy="94.5" r="0.5" fill="#cfa7a0"/><circle cx="90.2" cy="59.5" r="0.9" fill="#a8a070"/><circle cx="80.9" cy="96.6" r="0.6" fill="#b9b488"/><circle cx="175.1" cy="65.4" r="1.2" fill="#cfa7a0"/><circle cx="66.6" cy="63.3" r="0.9" fill="#f0b050"/><circle cx="8.8" cy="65.3" r="1.2" fill="#f0b050"/><circle cx="44.0" cy="80.4" r="1.2" fill="#a8a070"/>
<circle cx="56" cy="73" r="2.6" fill="#e9862a"/><circle cx="62" cy="83" r="2" fill="#e0902e"/><circle cx="77" cy="70" r="2" fill="#e7a070"/><circle cx="129" cy="60" r="2.2" fill="#e39a38"/><circle cx="133" cy="63" r="1.6" fill="#c9862e"/><circle cx="177" cy="57" r="2" fill="#e8a23c"/><circle cx="151" cy="74" r="2.2" fill="#e3a078"/><circle cx="24" cy="80" r="1.6" fill="#d99a3a"/><circle cx="100" cy="73" r="1.5" fill="#d9a060"/>
<circle cx="7" cy="63" r="3.2" fill="#cdb8a8" opacity="0.8"/><circle cx="30" cy="68" r="3" fill="#cfc0b0" opacity="0.7"/><circle cx="20" cy="64" r="2" fill="#c4b0a0" opacity="0.7"/><circle cx="14" cy="91" r="2.6" fill="#e6dfc8"/><circle cx="130" cy="95" r="2" fill="#d8d2bc"/></g>
</svg></div>


  <!-- transport -->
  <svg style="left:399px;top:255px" width="348" height="46" viewBox="399 255 348 46" fill="none">
    <rect x="412" y="262.2" width="322" height="3.6" fill="#1f1f2a"/><path d="M412 262.2 H734 M412 265.8 H734" stroke="#272733" stroke-width="0.8"/>
    <rect x="410.7" y="258.8" width="1.8" height="11" fill="#e9e9ef"/>
    <rect x="414.8" y="282.7" width="10.9" height="8.8" rx="1.4" stroke="#878793" stroke-width="1.25"/>
    <path d="M433.5 285.2 L437.3 288.8 L441.1 285.2" stroke="#8f8f9b" stroke-width="1.2" stroke-linecap="round" stroke-linejoin="round"/>
    <g fill="#adadb8">
      <path d="M474.6 282.2 h1.8 v10.2 h-1.8 Z M483.4 282.2 V292.4 L476.6 287.3 Z M490.3 282.2 V292.4 L483.5 287.3 Z"/>
      <path d="M512.8 282.2 V292.4 L505 287.3 Z M520.8 282.2 V292.4 L513 287.3 Z"/>
      <path d="M561.9 282 V292.6 L571.3 287.3 Z"/>
      <path d="M585.6 282.2 V292.4 L592.4 287.3 Z M592.5 282.2 V292.4 L599.3 287.3 Z M599.6 282.2 h1.8 v10.2 h-1.8 Z"/>
    </g>
    <rect x="536.4" y="282.3" width="9.6" height="10" fill="#9696a1"/>
    <g stroke="#adadb8" stroke-width="1.3" stroke-linecap="round" stroke-linejoin="round">
      <path d="M622 283.8 H616.3 C611.8 283.8 611.8 291.2 616.3 291.2 H623.6 C628.2 291.2 628.2 283.8 623.6 283.8"/>
      <path d="M620.3 281.2 L623 283.8 L620.3 286.4"/>
    </g>
    <g stroke="#53535e" stroke-width="1.1"><path d="M693.8 282 V292 L700.6 287 Z M702.2 281.6 V292.4"/></g>
    <g fill="#b4b4be"><path d="M717.8 281.6 h1.7 v10.8 h-1.7 Z M726 281.8 V292.2 L719.8 287 Z"/></g>
  </svg>
  <!-- timeline -->
  <div id="tlbg" style="left:42px;top:300px;width:705px;height:208px;background:#1a1a23"></div>
  <div style="left:42px;top:301px;width:128px;height:207px;background:#18171f"></div>
  <div class="gl" style="left:203px"></div><div class="gl" style="left:259px"></div><div class="gl" style="left:372.7px"></div><div class="gl" style="left:428px"></div><div class="gl" style="left:483.7px"></div><div class="gl" style="left:539.4px"></div><div class="gl" style="left:597.2px"></div><div class="gl" style="left:653.5px"></div><div class="gl" style="left:708px"></div>
  <div class="hl" style="top:300px"></div>
  <div class="hl" style="top:323px"></div>
  <div class="hl" style="top:354px"></div>
  <div class="hl" style="top:384.5px"></div>
  <div class="hl" style="top:448px"></div>
  <div class="hl" style="top:415.5px;width:129px"></div>
  <div class="hl" style="top:478px"></div>
  <div class="vl" style="left:170.5px;width:2px;background:#13121a"></div>
  <div class="vl" style="left:314.8px;width:1.5px;background:#0f0e15"></div>
  <div style="left:171px;top:415.7px;width:576px;height:1.4px;background:#42424e"></div>

  <span class="hb" style="top:334px">V</span><span class="hn" style="top:334px">V3</span>
  <span class="hb" style="top:364px;left:64px">2</span><span class="hn" style="top:364px">V2</span>
  <span class="hb" style="top:395px">A1</span><span class="hn" style="top:395px">Clip 1</span>
  <span class="hb" style="top:428px">A2</span><span class="hn" style="top:428px">Clip 1</span>
  <span class="hb" style="top:459px;-webkit-text-stroke:0">A1</span><span class="hn" style="top:459px">A3</span>
  <span class="hb" style="top:489px">A3</span><span class="hn" style="top:489px">A3</span>

  <div class="clip blue" style="left:240px;top:323.5px;width:75px;height:29px"><span>Clip 4</span></div>
  <div class="clip blue" style="left:316px;top:323.5px;width:197.5px;height:29px"></div>
  <div class="clip blue" style="left:316px;top:355px;width:96px;height:28px"><span>Clip 2</span></div>
  <div class="clip green" style="left:515px;top:355px;width:99.5px;height:28px"><span>Clip 2</span></div>
  <div class="clip green" style="left:316px;top:386px;width:197.5px;height:28px"><span>Clip 3</span></div>
  <div class="clip green" style="left:515px;top:386px;width:191px;height:28px"><span>Clip-3</span></div>
  <div class="clip green" style="left:316px;top:418.5px;width:390px;height:29px"><span>Clip 1</span></div>
  <div class="clip" style="left:240px;top:449px;width:75px;height:28px;background:#2f5676"></div>
  <div id="th1" class="clip" style="left:240px;top:355px;width:75px;height:59px;background:#5a4a3a;border-radius:0"><svg width="75" height="59" viewBox="0 0 75 59" style="left:0;top:0">
<defs>
<linearGradient id="ss" x1="0" y1="0" x2="0" y2="1"><stop offset="0" stop-color="#52667f"/><stop offset="0.45" stop-color="#75798a"/><stop offset="0.8" stop-color="#c08e6c"/><stop offset="1" stop-color="#e5a25e"/></linearGradient>
<linearGradient id="sea" x1="0" y1="0" x2="0" y2="1"><stop offset="0" stop-color="#58606c"/><stop offset="0.3" stop-color="#414f60"/><stop offset="1" stop-color="#36465a"/></linearGradient>
<radialGradient id="sun" cx="0.5" cy="0.5" r="0.5"><stop offset="0" stop-color="#fff0c0"/><stop offset="0.3" stop-color="#f8b85c" stop-opacity="0.9"/><stop offset="1" stop-color="#e59a50" stop-opacity="0"/></radialGradient>
<filter id="b3"><feGaussianBlur stdDeviation="0.55"/></filter>
<filter id="b4"><feGaussianBlur stdDeviation="1.6"/></filter>
</defs>
<rect width="75" height="18" fill="url(#ss)"/>
<g filter="url(#b4)"><ellipse cx="28" cy="12.5" rx="14" ry="1.6" fill="#a8806c" opacity="0.8"/><ellipse cx="10" cy="14" rx="12" ry="2" fill="#8c8088" opacity="0.8"/><ellipse cx="66" cy="11" rx="10" ry="1.5" fill="#c08a66" opacity="0.7"/></g>
<rect y="17" width="75" height="42" fill="url(#sea)"/>
<ellipse cx="52" cy="15.5" rx="13" ry="6.5" fill="url(#sun)"/>
<g filter="url(#b3)">
<path d="M49 17.5 H56 L57 27 H48.5 Z" fill="#e9a055" opacity="0.7"/>
<path d="M0 22 Q20 20.5 40 21 T75 19.5" stroke="#8f9aa6" stroke-width="0.6" fill="none" opacity="0.55"/>
<path d="M0 27 Q20 25 42 24.5 T75 21.5" stroke="#9aa5b0" stroke-width="0.7" fill="none" opacity="0.6"/>
<path d="M0 33 Q22 31 44 27.5 T75 23" stroke="#a9b3bc" stroke-width="0.8" fill="none" opacity="0.65"/>
<path d="M0 39 Q20 37.5 38 32 T75 24.5" stroke="#b4bcc4" stroke-width="0.8" fill="none" opacity="0.6"/>
<path d="M0 45 Q18 43 34 36.5 Q52 28.5 75 25.5 V59 H0 Z" fill="#35281f"/>
<path d="M0 44.5 Q18 42.5 34 36 Q52 28 75 25" stroke="#cdd2d4" stroke-width="1.2" fill="none" opacity="0.85"/>
<path d="M42 33.5 Q57 27.5 75 25.5 V33 Q58 35 46 39 Z" fill="#8f6242" opacity="0.75"/>
<path d="M0 47 Q20 48 38 41 L75 46 V59 H0 Z" fill="#1e1815" opacity="0.9"/>
</g>
</svg></div>
  <div id="th2" class="clip" style="left:240px;top:418.5px;width:75px;height:30.5px;background:#5a6a5a;border-radius:0"><svg width="75" height="31" viewBox="0 0 75 31" style="left:0;top:0">
<defs>
<linearGradient id="s2" x1="0" y1="0" x2="1" y2="0.35"><stop offset="0" stop-color="#a3bcc4"/><stop offset="0.55" stop-color="#c6cbc2"/><stop offset="1" stop-color="#dcc3a0"/></linearGradient>
<filter id="b5"><feGaussianBlur stdDeviation="0.55"/></filter>
<filter id="b6"><feGaussianBlur stdDeviation="1.5"/></filter>
</defs>
<rect width="75" height="31" fill="url(#s2)"/>
<g filter="url(#b6)"><ellipse cx="54" cy="19" rx="22" ry="5" fill="#d6cfc0"/><ellipse cx="60" cy="13" rx="14" ry="2" fill="#a89880" opacity="0.75"/></g>
<g filter="url(#b5)">
<path d="M36 14.5 L48 11.5 L58 13.5 L75 12.5 V18 H36 Z" fill="#7d7a6a" opacity="0.8"/>
<path d="M0 17 L4 12 L10 9 L15 7.5 L20 8.5 L25 11 L30 10 L36 15 L40 20 L45 24 L30 27 L0 27 Z" fill="#3b3a2b"/>
<path d="M10 9 L15 7.5 L20 8.5 L24 11.5 L18 14 L12 12.5 Z" fill="#6b5c44"/>
<path d="M26 12 L30 10.5 L35 15 L31 17 Z" fill="#5c5240"/>
<path d="M0 18 L10 15.5 L22 19 L32 22 L42 25 L0 28 Z" fill="#242c1e"/>
<path d="M30 24 Q42 19.5 54 22.5 T75 20.5 V25 H30 Z" fill="#c6c7bb" opacity="0.8"/>
<path d="M0 22 Q8 19.5 16 22 Q24 25 32 25.5 Q40 22 50 21.5 Q58 22 62 25 Q68 22 75 21.5 V31 H0 Z" fill="#1a2419"/>
</g>
</svg></div>

  <svg style="left:172px;top:320px;z-index:4" width="575" height="170" viewBox="172 320 575 170" fill="none">
    <path d="M317.0 338.45 L317.8 338.45 L318.6 338.45 L319.4 338.45 L320.2 338.45 L321.0 338.45 L321.8 338.07 L322.6 337.95 L323.4 337.61 L324.2 337.66 L325.0 338.34 L325.8 338.45 L326.6 338.45 L327.4 338.45 L328.2 338.45 L329.0 338.45 L329.8 338.12 L330.6 337.92 L331.4 337.06 L332.2 337.94 L333.0 338.45 L333.8 338.45 L334.6 338.45 L335.4 338.10 L336.2 337.81 L337.0 337.31 L337.8 337.80 L338.6 336.98 L339.4 336.62 L340.2 337.25 L341.0 337.18 L341.8 337.62 L342.6 338.45 L343.4 338.45 L344.2 338.45 L345.0 338.45 L345.8 338.45 L346.6 338.45 L347.4 338.45 L348.2 338.40 L349.0 337.89 L349.8 337.87 L350.6 338.06 L351.4 336.83 L352.2 337.36 L353.0 337.09 L353.8 337.08 L354.6 337.59 L355.4 337.93 L356.2 338.45 L357.0 338.45 L357.8 338.45 L358.6 338.45 L359.4 338.45 L360.2 338.45 L361.0 338.03 L361.8 338.00 L362.6 337.35 L363.4 337.22 L364.2 338.03 L365.0 337.94 L365.8 337.82 L366.6 336.86 L367.4 337.58 L368.2 337.44 L369.0 337.91 L369.8 337.86 L370.6 338.15 L371.4 338.42 L372.2 338.45 L373.0 338.45 L373.8 338.32 L374.6 338.29 L375.4 338.09 L376.2 338.04 L377.0 337.88 L377.8 338.01 L378.6 338.31 L379.4 337.77 L380.2 337.64 L381.0 337.64 L381.8 337.88 L382.6 337.73 L383.4 338.15 L384.2 337.59 L385.0 337.80 L385.8 338.05 L386.6 338.25 L387.4 337.53 L388.2 337.42 L389.0 338.24 L389.8 337.61 L390.6 337.97 L391.4 338.21 L392.2 338.11 L393.0 337.75 L393.8 337.71 L394.6 338.37 L395.4 338.00 L396.2 338.42 L397.0 338.05 L397.8 338.33 L398.6 338.11 L399.4 338.17 L400.2 338.45 L401.0 338.44 L401.8 338.45 L402.6 338.45 L403.4 338.45 L404.2 338.45 L405.0 338.45 L405.8 338.45 L406.6 338.45 L407.4 338.45 L408.2 338.45 L409.0 338.45 L409.8 338.45 L410.6 338.45 L411.4 338.45 L412.2 338.45 L413.0 338.45 L413.8 338.45 L414.6 338.45 L415.4 338.45 L416.2 338.45 L417.0 338.45 L417.8 338.45 L418.6 338.45 L419.4 338.45 L420.2 338.45 L421.0 338.45 L421.8 338.45 L422.6 338.45 L423.4 338.45 L424.2 338.45 L425.0 338.45 L425.8 338.45 L426.6 338.45 L427.4 338.45 L428.2 338.45 L429.0 338.45 L429.8 338.45 L430.6 338.45 L431.4 338.45 L432.2 338.45 L433.0 338.45 L433.8 338.26 L434.6 338.44 L435.4 338.34 L436.2 338.35 L437.0 338.45 L437.8 338.45 L438.6 338.45 L439.4 338.45 L440.2 338.45 L441.0 338.45 L441.8 338.45 L442.6 338.45 L443.4 338.45 L444.2 338.45 L445.0 338.45 L445.8 338.45 L446.6 338.45 L447.4 338.45 L448.2 338.45 L449.0 338.45 L449.8 338.45 L450.6 338.45 L451.4 338.45 L452.2 338.45 L453.0 338.45 L453.8 338.45 L454.6 338.45 L455.4 338.45 L456.2 338.45 L457.0 338.45 L457.8 338.45 L458.6 338.45 L459.4 338.45 L460.2 338.45 L461.0 338.45 L461.8 338.45 L462.6 338.45 L463.4 338.45 L464.2 338.45 L465.0 338.45 L465.8 338.45 L466.6 338.45 L467.4 338.45 L468.2 338.45 L469.0 338.45 L469.8 338.45 L470.6 338.45 L471.4 338.45 L472.2 338.45 L473.0 338.45 L473.8 338.45 L474.6 338.45 L475.4 338.45 L476.2 338.45 L477.0 338.45 L477.8 338.45 L478.6 338.45 L479.4 338.45 L480.2 338.45 L481.0 338.45 L481.8 338.45 L482.6 338.45 L483.4 338.45 L484.2 338.45 L485.0 338.45 L485.8 338.45 L486.6 338.45 L487.4 338.45 L488.2 338.45 L489.0 338.45 L489.8 338.45 L490.6 338.45 L491.4 338.45 L492.2 338.45 L493.0 338.45 L493.8 338.45 L494.6 338.34 L495.4 338.38 L496.2 338.43 L497.0 338.06 L497.8 338.45 L498.6 338.45 L499.4 338.45 L500.2 338.45 L501.0 338.45 L501.8 338.45 L502.6 338.45 L503.4 338.30 L504.2 337.88 L505.0 338.02 L505.8 337.80 L506.6 337.63 L507.4 337.43 L508.2 337.47 L509.0 337.55 L509.8 337.58 L510.6 337.42 L511.4 338.01 L512.2 338.31 L512.2 339.29 L511.4 339.59 L510.6 340.18 L509.8 340.02 L509.0 340.05 L508.2 340.13 L507.4 340.17 L506.6 339.97 L505.8 339.80 L505.0 339.58 L504.2 339.72 L503.4 339.30 L502.6 339.15 L501.8 339.15 L501.0 339.15 L500.2 339.15 L499.4 339.15 L498.6 339.15 L497.8 339.15 L497.0 339.54 L496.2 339.17 L495.4 339.22 L494.6 339.26 L493.8 339.15 L493.0 339.15 L492.2 339.15 L491.4 339.15 L490.6 339.15 L489.8 339.15 L489.0 339.15 L488.2 339.15 L487.4 339.15 L486.6 339.15 L485.8 339.15 L485.0 339.15 L484.2 339.15 L483.4 339.15 L482.6 339.15 L481.8 339.15 L481.0 339.15 L480.2 339.15 L479.4 339.15 L478.6 339.15 L477.8 339.15 L477.0 339.15 L476.2 339.15 L475.4 339.15 L474.6 339.15 L473.8 339.15 L473.0 339.15 L472.2 339.15 L471.4 339.15 L470.6 339.15 L469.8 339.15 L469.0 339.15 L468.2 339.15 L467.4 339.15 L466.6 339.15 L465.8 339.15 L465.0 339.15 L464.2 339.15 L463.4 339.15 L462.6 339.15 L461.8 339.15 L461.0 339.15 L460.2 339.15 L459.4 339.15 L458.6 339.15 L457.8 339.15 L457.0 339.15 L456.2 339.15 L455.4 339.15 L454.6 339.15 L453.8 339.15 L453.0 339.15 L452.2 339.15 L451.4 339.15 L450.6 339.15 L449.8 339.15 L449.0 339.15 L448.2 339.15 L447.4 339.15 L446.6 339.15 L445.8 339.15 L445.0 339.15 L444.2 339.15 L443.4 339.15 L442.6 339.15 L441.8 339.15 L441.0 339.15 L440.2 339.15 L439.4 339.15 L438.6 339.15 L437.8 339.15 L437.0 339.15 L436.2 339.25 L435.4 339.26 L434.6 339.16 L433.8 339.34 L433.0 339.15 L432.2 339.15 L431.4 339.15 L430.6 339.15 L429.8 339.15 L429.0 339.15 L428.2 339.15 L427.4 339.15 L426.6 339.15 L425.8 339.15 L425.0 339.15 L424.2 339.15 L423.4 339.15 L422.6 339.15 L421.8 339.15 L421.0 339.15 L420.2 339.15 L419.4 339.15 L418.6 339.15 L417.8 339.15 L417.0 339.15 L416.2 339.15 L415.4 339.15 L414.6 339.15 L413.8 339.15 L413.0 339.15 L412.2 339.15 L411.4 339.15 L410.6 339.15 L409.8 339.15 L409.0 339.15 L408.2 339.15 L407.4 339.15 L406.6 339.15 L405.8 339.15 L405.0 339.15 L404.2 339.15 L403.4 339.15 L402.6 339.15 L401.8 339.15 L401.0 339.16 L400.2 339.15 L399.4 339.43 L398.6 339.49 L397.8 339.27 L397.0 339.55 L396.2 339.18 L395.4 339.60 L394.6 339.23 L393.8 339.89 L393.0 339.85 L392.2 339.49 L391.4 339.39 L390.6 339.63 L389.8 339.99 L389.0 339.36 L388.2 340.18 L387.4 340.07 L386.6 339.35 L385.8 339.55 L385.0 339.80 L384.2 340.01 L383.4 339.45 L382.6 339.87 L381.8 339.72 L381.0 339.96 L380.2 339.96 L379.4 339.83 L378.6 339.29 L377.8 339.59 L377.0 339.72 L376.2 339.56 L375.4 339.51 L374.6 339.31 L373.8 339.28 L373.0 339.15 L372.2 339.15 L371.4 339.18 L370.6 339.45 L369.8 339.74 L369.0 339.69 L368.2 340.16 L367.4 340.02 L366.6 340.74 L365.8 339.78 L365.0 339.66 L364.2 339.57 L363.4 340.38 L362.6 340.25 L361.8 339.60 L361.0 339.57 L360.2 339.15 L359.4 339.15 L358.6 339.15 L357.8 339.15 L357.0 339.15 L356.2 339.15 L355.4 339.67 L354.6 340.01 L353.8 340.52 L353.0 340.51 L352.2 340.24 L351.4 340.77 L350.6 339.54 L349.8 339.73 L349.0 339.71 L348.2 339.20 L347.4 339.15 L346.6 339.15 L345.8 339.15 L345.0 339.15 L344.2 339.15 L343.4 339.15 L342.6 339.15 L341.8 339.98 L341.0 340.42 L340.2 340.35 L339.4 340.98 L338.6 340.62 L337.8 339.80 L337.0 340.29 L336.2 339.79 L335.4 339.50 L334.6 339.15 L333.8 339.15 L333.0 339.15 L332.2 339.66 L331.4 340.54 L330.6 339.68 L329.8 339.48 L329.0 339.15 L328.2 339.15 L327.4 339.15 L326.6 339.15 L325.8 339.15 L325.0 339.26 L324.2 339.94 L323.4 339.99 L322.6 339.65 L321.8 339.53 L321.0 339.15 L320.2 339.15 L319.4 339.15 L318.6 339.15 L317.8 339.15 L317.0 339.15 Z" fill="#9cbfe4" stroke="#9cbfe4" stroke-width="0.5"/>
    <path d="M347.5 368 H412" stroke="#8db2da" stroke-width="1"/>
    <path d="M347.5 400.3 H512" stroke="#74b389" stroke-width="1"/>
    <path d="M425 397.6 L429.5 400.3 L425 403 Z M451 397.6 L455.5 400.3 L451 403 Z M467 397.6 L471.5 400.3 L467 403 Z M490 397.6 L494.5 400.3 L490 403 Z " fill="#74b389"/>
    <path d="M548.0 399.90 L548.8 399.90 L549.6 399.90 L550.4 399.90 L551.2 399.90 L552.0 399.90 L552.8 399.90 L553.6 399.90 L554.4 399.90 L555.2 399.90 L556.0 399.76 L556.8 399.58 L557.6 399.02 L558.4 399.45 L559.2 399.65 L560.0 399.90 L560.8 399.90 L561.6 399.90 L562.4 399.90 L563.2 399.90 L564.0 399.90 L564.8 399.90 L565.6 399.65 L566.4 399.17 L567.2 399.58 L568.0 398.85 L568.8 398.90 L569.6 399.65 L570.4 399.53 L571.2 399.90 L572.0 399.90 L572.8 399.90 L573.6 399.90 L574.4 399.85 L575.2 399.40 L576.0 399.45 L576.8 399.02 L577.6 398.96 L578.4 399.68 L579.2 399.72 L580.0 399.48 L580.8 399.86 L581.6 399.90 L582.4 399.90 L583.2 399.90 L584.0 399.90 L584.8 399.90 L585.6 399.90 L586.4 399.80 L587.2 399.26 L588.0 398.85 L588.8 399.09 L589.6 399.06 L590.4 399.27 L591.2 399.51 L592.0 399.90 L592.8 399.90 L593.6 399.90 L594.4 399.90 L595.2 399.90 L596.0 399.90 L596.8 399.90 L597.6 399.80 L598.4 399.50 L599.2 398.99 L600.0 399.65 L600.8 399.18 L601.6 399.22 L602.4 399.79 L603.2 399.90 L604.0 399.90 L604.8 399.90 L605.6 399.90 L606.4 399.90 L607.2 399.90 L608.0 399.06 L608.8 399.34 L609.6 399.35 L610.4 399.17 L611.2 399.27 L612.0 399.90 L612.8 399.90 L613.6 399.90 L614.4 399.90 L615.2 399.90 L616.0 399.90 L616.8 399.90 L617.6 399.90 L618.4 399.90 L619.2 399.90 L620.0 399.90 L620.8 399.90 L621.6 399.90 L622.4 399.90 L623.2 399.90 L624.0 399.90 L624.8 399.90 L625.6 399.90 L626.4 399.90 L627.2 399.90 L628.0 399.90 L628.8 399.90 L629.6 399.90 L630.4 399.90 L631.2 399.90 L632.0 399.90 L632.8 399.90 L633.6 399.90 L634.4 399.90 L635.2 399.90 L636.0 399.90 L636.8 399.90 L637.6 399.90 L638.4 399.90 L639.2 399.90 L640.0 399.90 L640.8 399.90 L641.6 399.90 L642.4 399.90 L643.2 399.90 L644.0 399.90 L644.8 399.90 L645.6 399.90 L646.4 399.90 L647.2 399.90 L648.0 399.90 L648.8 399.90 L649.6 399.90 L650.4 399.90 L651.2 399.90 L652.0 399.90 L652.8 399.90 L653.6 399.90 L654.4 399.90 L655.2 399.90 L656.0 399.90 L656.8 399.90 L657.6 399.90 L658.4 399.90 L659.2 399.90 L660.0 399.90 L660.8 399.90 L661.6 399.90 L662.4 399.90 L663.2 399.90 L664.0 399.56 L664.8 398.86 L665.6 399.13 L666.4 398.68 L667.2 399.51 L668.0 399.56 L668.8 399.86 L669.6 399.90 L670.4 399.90 L671.2 399.90 L672.0 399.90 L672.8 399.90 L673.6 399.90 L674.4 399.90 L675.2 399.82 L676.0 399.52 L676.8 399.50 L677.6 399.52 L678.4 399.10 L679.2 399.53 L680.0 399.28 L680.8 399.83 L681.6 399.90 L682.4 399.90 L683.2 399.90 L684.0 399.90 L684.8 399.90 L685.6 399.90 L686.4 399.90 L687.2 399.90 L688.0 399.59 L688.8 398.83 L689.6 398.81 L690.4 398.54 L691.2 399.14 L692.0 399.49 L692.8 399.51 L693.6 399.61 L694.4 399.90 L695.2 399.90 L696.0 399.90 L696.8 399.90 L697.6 399.90 L698.4 399.90 L699.2 399.90 L700.0 399.90 L700.8 399.90 L701.6 399.90 L702.4 399.90 L703.2 399.90 L704.0 399.90 L704.0 400.50 L703.2 400.50 L702.4 400.50 L701.6 400.50 L700.8 400.50 L700.0 400.50 L699.2 400.50 L698.4 400.50 L697.6 400.50 L696.8 400.50 L696.0 400.50 L695.2 400.50 L694.4 400.50 L693.6 400.79 L692.8 400.89 L692.0 400.91 L691.2 401.26 L690.4 401.86 L689.6 401.59 L688.8 401.57 L688.0 400.81 L687.2 400.50 L686.4 400.50 L685.6 400.50 L684.8 400.50 L684.0 400.50 L683.2 400.50 L682.4 400.50 L681.6 400.50 L680.8 400.57 L680.0 401.12 L679.2 400.87 L678.4 401.30 L677.6 400.88 L676.8 400.90 L676.0 400.88 L675.2 400.58 L674.4 400.50 L673.6 400.50 L672.8 400.50 L672.0 400.50 L671.2 400.50 L670.4 400.50 L669.6 400.50 L668.8 400.54 L668.0 400.84 L667.2 400.89 L666.4 401.72 L665.6 401.27 L664.8 401.54 L664.0 400.84 L663.2 400.50 L662.4 400.50 L661.6 400.50 L660.8 400.50 L660.0 400.50 L659.2 400.50 L658.4 400.50 L657.6 400.50 L656.8 400.50 L656.0 400.50 L655.2 400.50 L654.4 400.50 L653.6 400.50 L652.8 400.50 L652.0 400.50 L651.2 400.50 L650.4 400.50 L649.6 400.50 L648.8 400.50 L648.0 400.50 L647.2 400.50 L646.4 400.50 L645.6 400.50 L644.8 400.50 L644.0 400.50 L643.2 400.50 L642.4 400.50 L641.6 400.50 L640.8 400.50 L640.0 400.50 L639.2 400.50 L638.4 400.50 L637.6 400.50 L636.8 400.50 L636.0 400.50 L635.2 400.50 L634.4 400.50 L633.6 400.50 L632.8 400.50 L632.0 400.50 L631.2 400.50 L630.4 400.50 L629.6 400.50 L628.8 400.50 L628.0 400.50 L627.2 400.50 L626.4 400.50 L625.6 400.50 L624.8 400.50 L624.0 400.50 L623.2 400.50 L622.4 400.50 L621.6 400.50 L620.8 400.50 L620.0 400.50 L619.2 400.50 L618.4 400.50 L617.6 400.50 L616.8 400.50 L616.0 400.50 L615.2 400.50 L614.4 400.50 L613.6 400.50 L612.8 400.50 L612.0 400.50 L611.2 401.13 L610.4 401.23 L609.6 401.05 L608.8 401.06 L608.0 401.34 L607.2 400.50 L606.4 400.50 L605.6 400.50 L604.8 400.50 L604.0 400.50 L603.2 400.50 L602.4 400.61 L601.6 401.18 L600.8 401.22 L600.0 400.75 L599.2 401.41 L598.4 400.90 L597.6 400.60 L596.8 400.50 L596.0 400.50 L595.2 400.50 L594.4 400.50 L593.6 400.50 L592.8 400.50 L592.0 400.50 L591.2 400.89 L590.4 401.13 L589.6 401.34 L588.8 401.31 L588.0 401.55 L587.2 401.14 L586.4 400.60 L585.6 400.50 L584.8 400.50 L584.0 400.50 L583.2 400.50 L582.4 400.50 L581.6 400.50 L580.8 400.54 L580.0 400.92 L579.2 400.68 L578.4 400.72 L577.6 401.44 L576.8 401.38 L576.0 400.95 L575.2 401.00 L574.4 400.55 L573.6 400.50 L572.8 400.50 L572.0 400.50 L571.2 400.50 L570.4 400.87 L569.6 400.75 L568.8 401.50 L568.0 401.55 L567.2 400.82 L566.4 401.23 L565.6 400.75 L564.8 400.50 L564.0 400.50 L563.2 400.50 L562.4 400.50 L561.6 400.50 L560.8 400.50 L560.0 400.50 L559.2 400.75 L558.4 400.95 L557.6 401.38 L556.8 400.82 L556.0 400.64 L555.2 400.50 L554.4 400.50 L553.6 400.50 L552.8 400.50 L552.0 400.50 L551.2 400.50 L550.4 400.50 L549.6 400.50 L548.8 400.50 L548.0 400.50 Z" fill="#77b58b" stroke="#77b58b" stroke-width="0.5"/>
    <path d="M348.0 437.25 L348.8 437.25 L349.6 437.25 L350.4 437.25 L351.2 437.25 L352.0 437.25 L352.8 437.25 L353.6 437.04 L354.4 436.91 L355.2 436.82 L356.0 436.31 L356.8 436.97 L357.6 437.11 L358.4 436.33 L359.2 436.50 L360.0 436.59 L360.8 437.11 L361.6 437.21 L362.4 437.25 L363.2 437.25 L364.0 437.25 L364.8 437.21 L365.6 436.63 L366.4 436.32 L367.2 436.33 L368.0 436.40 L368.8 436.63 L369.6 436.58 L370.4 436.76 L371.2 436.99 L372.0 436.64 L372.8 437.07 L373.6 437.15 L374.4 437.25 L375.2 437.25 L376.0 437.25 L376.8 437.25 L377.6 437.25 L378.4 437.25 L379.2 437.25 L380.0 437.25 L380.8 437.23 L381.6 437.12 L382.4 436.88 L383.2 436.77 L384.0 436.67 L384.8 436.81 L385.6 437.18 L386.4 436.58 L387.2 437.02 L388.0 436.90 L388.8 436.59 L389.6 436.70 L390.4 436.81 L391.2 436.41 L392.0 436.71 L392.8 436.96 L393.6 437.06 L394.4 436.74 L395.2 437.05 L396.0 437.01 L396.8 437.25 L397.6 437.25 L398.4 437.25 L399.2 437.25 L400.0 437.25 L400.8 437.25 L401.6 437.25 L402.4 437.25 L403.2 437.25 L404.0 437.25 L404.8 437.25 L405.6 437.25 L406.4 437.25 L407.2 437.25 L408.0 437.25 L408.8 437.25 L409.6 437.25 L410.4 437.25 L411.2 437.25 L412.0 437.25 L412.8 437.25 L413.6 437.25 L414.4 437.25 L415.2 437.25 L416.0 437.25 L416.8 437.25 L417.6 437.25 L418.4 437.25 L419.2 437.25 L420.0 437.25 L420.8 437.25 L421.6 437.25 L422.4 437.25 L423.2 437.25 L424.0 437.25 L424.8 437.25 L425.6 437.25 L426.4 437.25 L427.2 437.25 L428.0 437.25 L428.8 437.25 L429.6 437.25 L430.4 437.25 L431.2 436.96 L432.0 437.18 L432.8 436.74 L433.6 436.68 L434.4 436.87 L435.2 437.08 L436.0 437.25 L436.8 437.25 L437.6 437.25 L438.4 437.25 L439.2 437.25 L440.0 437.25 L440.8 437.25 L441.6 437.25 L442.4 437.25 L443.2 437.25 L444.0 437.25 L444.8 437.15 L445.6 437.16 L446.4 437.11 L447.2 436.92 L448.0 437.25 L448.8 437.25 L449.6 437.21 L450.4 437.20 L451.2 437.22 L452.0 436.65 L452.8 436.71 L453.6 437.20 L454.4 436.92 L455.2 437.04 L456.0 437.05 L456.8 437.03 L457.6 436.85 L458.4 436.90 L459.2 437.05 L460.0 437.17 L460.8 437.10 L461.6 437.23 L462.4 437.02 L463.2 436.97 L464.0 437.17 L464.8 437.25 L465.6 437.25 L466.4 437.25 L467.2 437.25 L468.0 437.25 L468.8 437.25 L469.6 437.25 L470.4 437.25 L471.2 437.25 L472.0 437.25 L472.8 437.25 L473.6 437.25 L474.4 437.25 L475.2 437.25 L476.0 437.25 L476.8 437.25 L477.6 437.25 L478.4 437.25 L479.2 437.25 L480.0 437.25 L480.8 437.25 L481.6 437.25 L482.4 437.25 L483.2 437.25 L484.0 437.25 L484.8 437.13 L485.6 436.95 L486.4 437.05 L487.2 436.84 L488.0 436.94 L488.8 437.06 L489.6 436.85 L490.4 436.72 L491.2 437.16 L492.0 436.92 L492.8 436.93 L493.6 436.65 L494.4 436.66 L495.2 437.05 L496.0 436.81 L496.8 436.95 L497.6 437.25 L498.4 437.25 L499.2 437.25 L500.0 437.25 L500.8 437.25 L501.6 437.25 L502.4 437.25 L503.2 437.25 L504.0 437.25 L504.8 437.25 L505.6 437.25 L506.4 437.25 L507.2 437.25 L508.0 437.25 L508.8 437.25 L509.6 437.25 L510.4 437.25 L511.2 437.17 L512.0 436.93 L512.8 436.86 L513.6 436.86 L514.4 436.78 L515.2 436.88 L516.0 437.20 L516.8 436.94 L517.6 437.25 L518.4 437.25 L519.2 437.23 L520.0 437.25 L520.8 437.25 L521.6 437.25 L522.4 437.25 L523.2 437.25 L524.0 437.25 L524.8 437.25 L525.6 437.25 L526.4 437.25 L527.2 437.25 L528.0 437.25 L528.8 437.25 L529.6 437.25 L530.4 437.25 L531.2 437.25 L532.0 437.25 L532.8 437.25 L533.6 437.25 L534.4 437.25 L535.2 437.25 L536.0 437.25 L536.8 437.25 L537.6 437.25 L538.4 437.25 L539.2 437.25 L540.0 437.25 L540.8 437.25 L541.6 437.25 L542.4 437.25 L543.2 437.25 L544.0 437.25 L544.8 437.25 L545.6 437.25 L546.4 437.25 L547.2 437.25 L548.0 437.25 L548.8 437.25 L549.6 437.25 L550.4 436.79 L551.2 437.15 L552.0 437.23 L552.8 436.73 L553.6 437.22 L554.4 436.95 L555.2 437.21 L556.0 437.25 L556.8 437.25 L557.6 437.25 L558.4 437.25 L559.2 437.25 L560.0 437.25 L560.8 436.84 L561.6 436.75 L562.4 436.34 L563.2 436.97 L564.0 436.04 L564.8 436.28 L565.6 435.98 L566.4 436.76 L567.2 435.98 L568.0 435.84 L568.8 436.95 L569.6 436.78 L570.4 436.76 L571.2 436.91 L572.0 437.25 L572.8 437.25 L573.6 437.25 L574.4 437.25 L575.2 437.25 L576.0 437.12 L576.8 436.95 L577.6 437.06 L578.4 437.01 L579.2 436.94 L580.0 436.92 L580.8 436.83 L581.6 437.07 L582.4 436.68 L583.2 436.22 L584.0 436.71 L584.8 436.37 L585.6 436.92 L586.4 436.40 L587.2 436.34 L588.0 436.42 L588.8 436.59 L589.6 436.63 L590.4 436.51 L591.2 436.31 L592.0 437.00 L592.8 437.07 L593.6 436.59 L594.4 436.53 L595.2 436.88 L596.0 437.00 L596.8 436.92 L597.6 437.25 L598.4 437.25 L599.2 437.25 L600.0 437.25 L600.8 437.25 L601.6 437.25 L602.4 437.25 L603.2 437.25 L604.0 437.25 L604.8 437.25 L605.6 437.25 L606.4 437.25 L607.2 437.25 L608.0 437.25 L608.8 437.25 L609.6 437.25 L610.4 437.25 L611.2 437.25 L612.0 437.25 L612.8 437.25 L613.6 437.25 L614.4 437.25 L615.2 437.25 L616.0 437.25 L616.8 437.25 L617.6 437.25 L618.4 437.25 L619.2 437.25 L620.0 437.25 L620.8 437.25 L621.6 437.17 L622.4 436.74 L623.2 436.39 L624.0 436.85 L624.8 436.40 L625.6 436.64 L626.4 436.16 L627.2 436.43 L628.0 436.77 L628.8 436.85 L629.6 437.08 L630.4 436.73 L631.2 436.90 L632.0 437.15 L632.8 437.18 L633.6 437.25 L634.4 437.25 L635.2 437.25 L636.0 436.67 L636.8 436.85 L637.6 436.63 L638.4 436.64 L639.2 436.16 L640.0 436.07 L640.8 436.29 L641.6 436.31 L642.4 435.94 L643.2 435.70 L644.0 436.28 L644.8 435.77 L645.6 435.41 L646.4 436.11 L647.2 436.45 L648.0 436.44 L648.8 435.73 L649.6 435.80 L650.4 435.41 L651.2 435.60 L652.0 436.50 L652.8 436.61 L653.6 436.55 L654.4 436.68 L655.2 436.11 L656.0 436.03 L656.8 436.10 L657.6 436.84 L658.4 436.40 L659.2 436.97 L660.0 437.02 L660.8 437.03 L661.6 437.25 L662.4 437.25 L663.2 437.25 L664.0 437.25 L664.8 437.25 L665.6 437.25 L666.4 437.25 L667.2 437.25 L668.0 437.25 L668.8 437.25 L669.6 436.90 L670.4 437.07 L671.2 436.92 L672.0 436.64 L672.8 436.46 L673.6 437.05 L674.4 436.66 L675.2 436.50 L676.0 436.40 L676.8 436.70 L677.6 436.23 L678.4 435.76 L679.2 436.45 L680.0 436.27 L680.8 436.80 L681.6 436.64 L682.4 436.22 L683.2 436.88 L684.0 436.11 L684.8 436.19 L685.6 437.03 L686.4 436.41 L687.2 436.96 L688.0 436.84 L688.8 437.05 L689.6 437.25 L690.4 437.25 L691.2 437.25 L692.0 437.25 L692.8 437.13 L693.6 436.91 L694.4 436.63 L695.2 436.93 L696.0 436.40 L696.8 436.12 L697.6 436.36 L698.4 436.48 L699.2 436.93 L700.0 436.57 L700.8 436.76 L701.6 436.52 L702.4 436.68 L703.2 436.92 L704.0 437.25 L704.8 437.25 L704.8 437.95 L704.0 437.95 L703.2 438.28 L702.4 438.52 L701.6 438.68 L700.8 438.44 L700.0 438.63 L699.2 438.27 L698.4 438.72 L697.6 438.84 L696.8 439.08 L696.0 438.80 L695.2 438.27 L694.4 438.57 L693.6 438.29 L692.8 438.07 L692.0 437.95 L691.2 437.95 L690.4 437.95 L689.6 437.95 L688.8 438.15 L688.0 438.36 L687.2 438.24 L686.4 438.79 L685.6 438.17 L684.8 439.01 L684.0 439.09 L683.2 438.32 L682.4 438.98 L681.6 438.56 L680.8 438.40 L680.0 438.93 L679.2 438.75 L678.4 439.44 L677.6 438.97 L676.8 438.50 L676.0 438.80 L675.2 438.70 L674.4 438.54 L673.6 438.15 L672.8 438.74 L672.0 438.56 L671.2 438.28 L670.4 438.13 L669.6 438.30 L668.8 437.95 L668.0 437.95 L667.2 437.95 L666.4 437.95 L665.6 437.95 L664.8 437.95 L664.0 437.95 L663.2 437.95 L662.4 437.95 L661.6 437.95 L660.8 438.17 L660.0 438.18 L659.2 438.23 L658.4 438.80 L657.6 438.36 L656.8 439.10 L656.0 439.17 L655.2 439.09 L654.4 438.52 L653.6 438.65 L652.8 438.59 L652.0 438.70 L651.2 439.60 L650.4 439.79 L649.6 439.40 L648.8 439.47 L648.0 438.76 L647.2 438.75 L646.4 439.09 L645.6 439.79 L644.8 439.43 L644.0 438.92 L643.2 439.50 L642.4 439.26 L641.6 438.89 L640.8 438.91 L640.0 439.13 L639.2 439.04 L638.4 438.56 L637.6 438.57 L636.8 438.35 L636.0 438.53 L635.2 437.95 L634.4 437.95 L633.6 437.95 L632.8 438.02 L632.0 438.05 L631.2 438.30 L630.4 438.47 L629.6 438.12 L628.8 438.35 L628.0 438.43 L627.2 438.77 L626.4 439.04 L625.6 438.56 L624.8 438.80 L624.0 438.35 L623.2 438.81 L622.4 438.46 L621.6 438.03 L620.8 437.95 L620.0 437.95 L619.2 437.95 L618.4 437.95 L617.6 437.95 L616.8 437.95 L616.0 437.95 L615.2 437.95 L614.4 437.95 L613.6 437.95 L612.8 437.95 L612.0 437.95 L611.2 437.95 L610.4 437.95 L609.6 437.95 L608.8 437.95 L608.0 437.95 L607.2 437.95 L606.4 437.95 L605.6 437.95 L604.8 437.95 L604.0 437.95 L603.2 437.95 L602.4 437.95 L601.6 437.95 L600.8 437.95 L600.0 437.95 L599.2 437.95 L598.4 437.95 L597.6 437.95 L596.8 438.28 L596.0 438.20 L595.2 438.32 L594.4 438.67 L593.6 438.61 L592.8 438.13 L592.0 438.20 L591.2 438.89 L590.4 438.69 L589.6 438.57 L588.8 438.61 L588.0 438.78 L587.2 438.86 L586.4 438.80 L585.6 438.28 L584.8 438.83 L584.0 438.49 L583.2 438.98 L582.4 438.52 L581.6 438.13 L580.8 438.37 L580.0 438.28 L579.2 438.26 L578.4 438.19 L577.6 438.14 L576.8 438.25 L576.0 438.08 L575.2 437.95 L574.4 437.95 L573.6 437.95 L572.8 437.95 L572.0 437.95 L571.2 438.29 L570.4 438.44 L569.6 438.42 L568.8 438.25 L568.0 439.36 L567.2 439.22 L566.4 438.44 L565.6 439.22 L564.8 438.92 L564.0 439.16 L563.2 438.23 L562.4 438.86 L561.6 438.45 L560.8 438.36 L560.0 437.95 L559.2 437.95 L558.4 437.95 L557.6 437.95 L556.8 437.95 L556.0 437.95 L555.2 437.99 L554.4 438.25 L553.6 437.98 L552.8 438.47 L552.0 437.97 L551.2 438.05 L550.4 438.41 L549.6 437.95 L548.8 437.95 L548.0 437.95 L547.2 437.95 L546.4 437.95 L545.6 437.95 L544.8 437.95 L544.0 437.95 L543.2 437.95 L542.4 437.95 L541.6 437.95 L540.8 437.95 L540.0 437.95 L539.2 437.95 L538.4 437.95 L537.6 437.95 L536.8 437.95 L536.0 437.95 L535.2 437.95 L534.4 437.95 L533.6 437.95 L532.8 437.95 L532.0 437.95 L531.2 437.95 L530.4 437.95 L529.6 437.95 L528.8 437.95 L528.0 437.95 L527.2 437.95 L526.4 437.95 L525.6 437.95 L524.8 437.95 L524.0 437.95 L523.2 437.95 L522.4 437.95 L521.6 437.95 L520.8 437.95 L520.0 437.95 L519.2 437.97 L518.4 437.95 L517.6 437.95 L516.8 438.26 L516.0 438.00 L515.2 438.32 L514.4 438.42 L513.6 438.34 L512.8 438.34 L512.0 438.27 L511.2 438.03 L510.4 437.95 L509.6 437.95 L508.8 437.95 L508.0 437.95 L507.2 437.95 L506.4 437.95 L505.6 437.95 L504.8 437.95 L504.0 437.95 L503.2 437.95 L502.4 437.95 L501.6 437.95 L500.8 437.95 L500.0 437.95 L499.2 437.95 L498.4 437.95 L497.6 437.95 L496.8 438.25 L496.0 438.39 L495.2 438.15 L494.4 438.54 L493.6 438.55 L492.8 438.27 L492.0 438.28 L491.2 438.04 L490.4 438.48 L489.6 438.35 L488.8 438.14 L488.0 438.26 L487.2 438.36 L486.4 438.15 L485.6 438.25 L484.8 438.07 L484.0 437.95 L483.2 437.95 L482.4 437.95 L481.6 437.95 L480.8 437.95 L480.0 437.95 L479.2 437.95 L478.4 437.95 L477.6 437.95 L476.8 437.95 L476.0 437.95 L475.2 437.95 L474.4 437.95 L473.6 437.95 L472.8 437.95 L472.0 437.95 L471.2 437.95 L470.4 437.95 L469.6 437.95 L468.8 437.95 L468.0 437.95 L467.2 437.95 L466.4 437.95 L465.6 437.95 L464.8 437.95 L464.0 438.03 L463.2 438.23 L462.4 438.18 L461.6 437.97 L460.8 438.10 L460.0 438.03 L459.2 438.15 L458.4 438.30 L457.6 438.35 L456.8 438.17 L456.0 438.15 L455.2 438.16 L454.4 438.28 L453.6 438.00 L452.8 438.49 L452.0 438.55 L451.2 437.98 L450.4 438.00 L449.6 437.99 L448.8 437.95 L448.0 437.95 L447.2 438.28 L446.4 438.09 L445.6 438.04 L444.8 438.05 L444.0 437.95 L443.2 437.95 L442.4 437.95 L441.6 437.95 L440.8 437.95 L440.0 437.95 L439.2 437.95 L438.4 437.95 L437.6 437.95 L436.8 437.95 L436.0 437.95 L435.2 438.12 L434.4 438.33 L433.6 438.52 L432.8 438.46 L432.0 438.02 L431.2 438.24 L430.4 437.95 L429.6 437.95 L428.8 437.95 L428.0 437.95 L427.2 437.95 L426.4 437.95 L425.6 437.95 L424.8 437.95 L424.0 437.95 L423.2 437.95 L422.4 437.95 L421.6 437.95 L420.8 437.95 L420.0 437.95 L419.2 437.95 L418.4 437.95 L417.6 437.95 L416.8 437.95 L416.0 437.95 L415.2 437.95 L414.4 437.95 L413.6 437.95 L412.8 437.95 L412.0 437.95 L411.2 437.95 L410.4 437.95 L409.6 437.95 L408.8 437.95 L408.0 437.95 L407.2 437.95 L406.4 437.95 L405.6 437.95 L404.8 437.95 L404.0 437.95 L403.2 437.95 L402.4 437.95 L401.6 437.95 L400.8 437.95 L400.0 437.95 L399.2 437.95 L398.4 437.95 L397.6 437.95 L396.8 437.95 L396.0 438.19 L395.2 438.15 L394.4 438.46 L393.6 438.14 L392.8 438.24 L392.0 438.49 L391.2 438.79 L390.4 438.39 L389.6 438.50 L388.8 438.61 L388.0 438.30 L387.2 438.18 L386.4 438.62 L385.6 438.02 L384.8 438.39 L384.0 438.53 L383.2 438.43 L382.4 438.32 L381.6 438.08 L380.8 437.97 L380.0 437.95 L379.2 437.95 L378.4 437.95 L377.6 437.95 L376.8 437.95 L376.0 437.95 L375.2 437.95 L374.4 437.95 L373.6 438.05 L372.8 438.13 L372.0 438.56 L371.2 438.21 L370.4 438.44 L369.6 438.62 L368.8 438.57 L368.0 438.80 L367.2 438.87 L366.4 438.88 L365.6 438.57 L364.8 437.99 L364.0 437.95 L363.2 437.95 L362.4 437.95 L361.6 437.99 L360.8 438.09 L360.0 438.61 L359.2 438.70 L358.4 438.87 L357.6 438.09 L356.8 438.23 L356.0 438.89 L355.2 438.38 L354.4 438.29 L353.6 438.16 L352.8 437.95 L352.0 437.95 L351.2 437.95 L350.4 437.95 L349.6 437.95 L348.8 437.95 L348.0 437.95 Z" fill="#6fae85" stroke="#6fae85" stroke-width="0.5"/>
    <path d="M242.0 462.60 L242.6 462.60 L243.2 462.60 L243.8 462.60 L244.4 462.60 L245.0 462.60 L245.6 462.60 L246.2 461.67 L246.8 459.72 L247.4 458.60 L248.0 457.72 L248.6 458.80 L249.2 459.22 L249.8 462.42 L250.4 460.92 L251.0 457.70 L251.6 457.91 L252.2 456.30 L252.8 460.39 L253.4 459.36 L254.0 461.21 L254.6 462.28 L255.2 460.70 L255.8 461.68 L256.4 460.98 L257.0 461.08 L257.6 460.74 L258.2 461.91 L258.8 461.88 L259.4 460.45 L260.0 462.13 L260.6 462.60 L261.2 462.60 L261.8 462.60 L262.4 462.60 L263.0 462.60 L263.6 462.38 L264.2 461.96 L264.8 461.90 L265.4 459.25 L266.0 461.14 L266.6 461.31 L267.2 460.17 L267.8 461.83 L268.4 462.45 L269.0 461.26 L269.6 461.55 L270.2 461.31 L270.8 462.14 L271.4 461.69 L272.0 462.60 L272.6 462.60 L273.2 462.60 L273.8 462.60 L274.4 462.60 L275.0 462.60 L275.6 462.60 L276.2 462.60 L276.8 462.60 L277.4 462.60 L278.0 462.60 L278.6 462.60 L279.2 462.60 L279.8 462.60 L280.4 462.60 L281.0 462.60 L281.6 462.60 L282.2 462.60 L282.8 462.60 L283.4 462.60 L284.0 462.60 L284.6 462.60 L285.2 462.60 L285.8 462.60 L286.4 462.60 L287.0 462.60 L287.6 462.60 L288.2 462.60 L288.8 462.60 L289.4 462.60 L290.0 462.60 L290.6 462.60 L291.2 462.60 L291.8 462.60 L292.4 462.60 L293.0 462.60 L293.6 462.60 L294.2 462.60 L294.8 462.60 L295.4 462.60 L296.0 462.60 L296.6 462.60 L297.2 462.60 L297.8 462.60 L298.4 462.60 L299.0 462.60 L299.6 462.60 L300.2 462.60 L300.8 462.60 L301.4 462.60 L302.0 462.60 L302.6 462.60 L303.2 462.60 L303.8 462.60 L304.4 462.60 L305.0 462.60 L305.6 462.60 L306.2 462.60 L306.8 462.60 L307.4 462.60 L308.0 462.60 L308.6 462.60 L309.2 462.60 L309.8 462.60 L310.4 462.60 L311.0 462.60 L311.6 462.60 L312.2 462.60 L312.8 462.60 L313.4 462.60 L313.4 463.40 L312.8 463.40 L312.2 463.40 L311.6 463.40 L311.0 463.40 L310.4 463.40 L309.8 463.40 L309.2 463.40 L308.6 463.40 L308.0 463.40 L307.4 463.40 L306.8 463.40 L306.2 463.40 L305.6 463.40 L305.0 463.40 L304.4 463.40 L303.8 463.40 L303.2 463.40 L302.6 463.40 L302.0 463.40 L301.4 463.40 L300.8 463.40 L300.2 463.40 L299.6 463.40 L299.0 463.40 L298.4 463.40 L297.8 463.40 L297.2 463.40 L296.6 463.40 L296.0 463.40 L295.4 463.40 L294.8 463.40 L294.2 463.40 L293.6 463.40 L293.0 463.40 L292.4 463.40 L291.8 463.40 L291.2 463.40 L290.6 463.40 L290.0 463.40 L289.4 463.40 L288.8 463.40 L288.2 463.40 L287.6 463.40 L287.0 463.40 L286.4 463.40 L285.8 463.40 L285.2 463.40 L284.6 463.40 L284.0 463.40 L283.4 463.40 L282.8 463.40 L282.2 463.40 L281.6 463.40 L281.0 463.40 L280.4 463.40 L279.8 463.40 L279.2 463.40 L278.6 463.40 L278.0 463.40 L277.4 463.40 L276.8 463.40 L276.2 463.40 L275.6 463.40 L275.0 463.40 L274.4 463.40 L273.8 463.40 L273.2 463.40 L272.6 463.40 L272.0 463.40 L271.4 464.31 L270.8 463.86 L270.2 464.69 L269.6 464.45 L269.0 464.74 L268.4 463.55 L267.8 464.17 L267.2 465.83 L266.6 464.69 L266.0 464.86 L265.4 466.75 L264.8 464.10 L264.2 464.04 L263.6 463.62 L263.0 463.40 L262.4 463.40 L261.8 463.40 L261.2 463.40 L260.6 463.40 L260.0 463.87 L259.4 465.55 L258.8 464.12 L258.2 464.09 L257.6 465.26 L257.0 464.92 L256.4 465.02 L255.8 464.32 L255.2 465.30 L254.6 463.72 L254.0 464.79 L253.4 466.64 L252.8 465.61 L252.2 469.70 L251.6 468.09 L251.0 468.30 L250.4 465.08 L249.8 463.58 L249.2 466.78 L248.6 467.20 L248.0 468.28 L247.4 467.40 L246.8 466.28 L246.2 464.33 L245.6 463.40 L245.0 463.40 L244.4 463.40 L243.8 463.40 L243.2 463.40 L242.6 463.40 L242.0 463.40 Z" fill="#add0ea" stroke="#add0ea" stroke-width="0.4"/>
  </svg>

  <svg style="left:270px;top:160px;z-index:6" width="140" height="170" viewBox="270 160 140 170" fill="none" stroke-linecap="round" stroke-linejoin="round">
    <path d="M279.5 177.8 H395 M391.6 174.4 L395.2 177.8 L391.6 181.2" stroke="#deae88" stroke-width="1.3"/>
    <path d="M281.2 258.5 V319.6 M277.8 316.2 L281.2 319.8 L284.6 316.2" stroke="#c9a649" stroke-width="1.6"/>
  </svg>
</div></div>
</body>
</html>
